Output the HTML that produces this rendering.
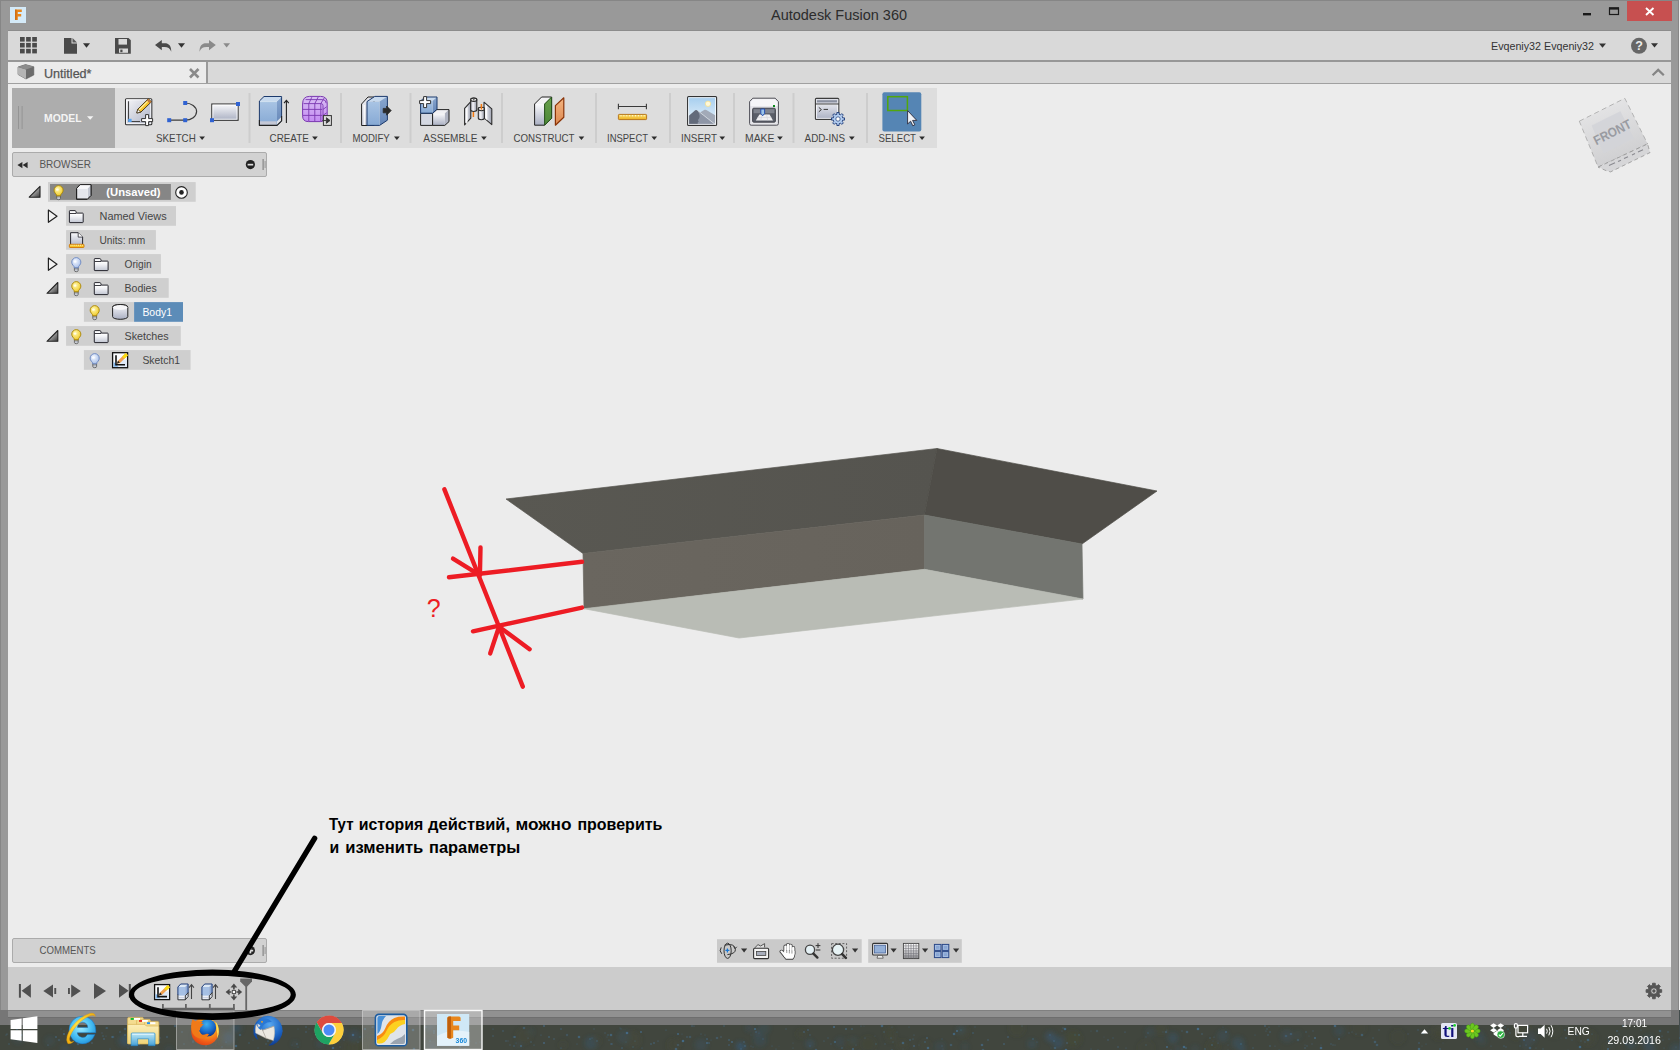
<!DOCTYPE html>
<html><head><meta charset="utf-8">
<style>
*{box-sizing:border-box;margin:0;padding:0}
html,body{width:1680px;height:1050px;overflow:hidden;background:#3d3f36;font-family:"Liberation Sans",sans-serif;}
.abs{position:absolute}
svg text{font-family:"Liberation Sans",sans-serif}
#desk{left:0;top:0;width:1680px;height:1050px;background:#3e4136}
#win{left:0;top:0;width:1679px;height:1025px;background:#999999;border:1px solid #868686;border-bottom:none}
#qat{left:8px;top:30px;width:1663px;height:30px;background:#d9d9d9;border-top:1px solid #8c8c8c}
#sep1{left:8px;top:60px;width:1663px;height:2px;background:#979797}
#tabbar{left:8px;top:62px;width:1663px;height:21px;background:#d9d9d9}
#tab{left:8px;top:62px;width:200px;height:21px;background:#ebebeb;border-right:2px solid #9a9a9a}
#sep2{left:8px;top:83px;width:1663px;height:1px;background:#a0a0a0}
#canvas{left:8px;top:84px;width:1663px;height:883px;background:#ececec}
#tl{left:8px;top:967px;width:1663px;height:43px;background:#cccccc}
#toolbar{left:12px;top:88px;width:925px;height:60px;background:#dddddd}
#model{left:12px;top:88px;width:103px;height:60px;background:#adadad}
#bh{left:12px;top:152px;width:255px;height:25px;background:#d2d2d2;border:1px solid #ababab;border-radius:2px}
#ch{left:12px;top:938px;width:255px;height:25px;background:#d2d2d2;border:1px solid #ababab;border-radius:2px}
#rstrip{left:1679px;top:0;width:1px;height:1010px;background:#f2f2f2}
#closeb{left:1627px;top:1px;width:45px;height:20px;background:#c75050}
</style></head><body>
<div id="desk" class="abs"></div>
<div id="win" class="abs"></div>
<div id="rstrip" class="abs"></div>
<div id="closeb" class="abs"></div>
<div id="qat" class="abs"></div>
<div id="sep1" class="abs"></div>
<div id="tabbar" class="abs"></div>
<div id="tab" class="abs"></div>
<div id="sep2" class="abs"></div>
<div id="canvas" class="abs"></div>
<div id="tl" class="abs"></div>
<div id="toolbar" class="abs"></div>
<div id="model" class="abs"></div>
<div id="bh" class="abs"></div>
<div id="ch" class="abs"></div>
<svg class="abs" style="left:0;top:0" width="1680" height="1050" viewBox="0 0 1680 1050">
<defs>
<linearGradient id="gGray" x1="0" y1="0" x2="0" y2="1"><stop offset="0" stop-color="#fafafc"/><stop offset="1" stop-color="#a9afc2"/></linearGradient>
<linearGradient id="gGrayD" x1="0" y1="0" x2="1" y2="1"><stop offset="0" stop-color="#f8f8fa"/><stop offset="1" stop-color="#aab0c4"/></linearGradient>
<linearGradient id="gBlue" x1="0" y1="0" x2="0" y2="1"><stop offset="0" stop-color="#a9c4e4"/><stop offset="1" stop-color="#86a9d4"/></linearGradient>
<linearGradient id="gBlueS" x1="0" y1="0" x2="0" y2="1"><stop offset="0" stop-color="#89a7d0"/><stop offset="1" stop-color="#6485b6"/></linearGradient>
<linearGradient id="gPurple" x1="0" y1="0" x2="0" y2="1"><stop offset="0" stop-color="#d9c0f4"/><stop offset="1" stop-color="#c48cf2"/></linearGradient>
<linearGradient id="gSky" x1="0" y1="0" x2="0" y2="1"><stop offset="0" stop-color="#a4cdee"/><stop offset="1" stop-color="#eef6fc"/></linearGradient>
<linearGradient id="gOr" x1="0" y1="0" x2="0" y2="1"><stop offset="0" stop-color="#f4b480"/><stop offset="1" stop-color="#dc8850"/></linearGradient>
<linearGradient id="gGreen" x1="0" y1="0" x2="0" y2="1"><stop offset="0" stop-color="#68a04c"/><stop offset="1" stop-color="#4c8838"/></linearGradient>
<linearGradient id="gYel" x1="0" y1="0" x2="0" y2="1"><stop offset="0" stop-color="#fbe070"/><stop offset="1" stop-color="#eeb020"/></linearGradient>
<linearGradient id="gFold" x1="0" y1="0" x2="0" y2="1"><stop offset="0" stop-color="#ffffff"/><stop offset="0.45" stop-color="#f4f5f8"/><stop offset="1" stop-color="#c2c6d2"/></linearGradient>
<radialGradient id="gBulbY" cx="0.4" cy="0.35" r="0.7"><stop offset="0" stop-color="#fff8b0"/><stop offset="1" stop-color="#f0c820"/></radialGradient>
<radialGradient id="gBulbB" cx="0.4" cy="0.35" r="0.7"><stop offset="0" stop-color="#f4f8ff"/><stop offset="1" stop-color="#a4bce8"/></radialGradient>
</defs>

<g id="titlebar">
<rect x="10" y="7" width="16" height="16" fill="#d4eaf8"/>
<path d="M15.2 9.5 h6.6 v2.6 h-4 v2 h3.4 v2.4 h-3.4 v3.6 h-2.6 z" fill="#e8861c"/>
<path d="M15.2 9.5 h1.2 v10.6 h-1.2 z" fill="#c8640c"/>
<text x="771" y="20.4" textLength="136" lengthAdjust="spacingAndGlyphs" font-size="15" fill="#2c2c2c" font-weight="normal" >Autodesk Fusion 360</text>
<rect x="1583" y="13" width="8" height="2.4" fill="#1a1a1a"/>
<rect x="1609.5" y="8" width="9" height="6.5" fill="none" stroke="#1a1a1a" stroke-width="1.2"/><rect x="1609" y="7.4" width="10" height="2.2" fill="#1a1a1a"/>
<path d="M1646 8 l7.5 7 M1653.5 8 l-7.5 7" stroke="#fff" stroke-width="1.9" fill="none"/>
</g>
<g id="qat-icons" fill="#4a4a4a">
<rect x="20.0" y="37.0" width="4.7" height="4.6"/>
<rect x="26.1" y="37.0" width="4.7" height="4.6"/>
<rect x="32.2" y="37.0" width="4.7" height="4.6"/>
<rect x="20.0" y="42.9" width="4.7" height="4.6"/>
<rect x="26.1" y="42.9" width="4.7" height="4.6"/>
<rect x="32.2" y="42.9" width="4.7" height="4.6"/>
<rect x="20.0" y="48.8" width="4.7" height="4.6"/>
<rect x="26.1" y="48.8" width="4.7" height="4.6"/>
<rect x="32.2" y="48.8" width="4.7" height="4.6"/>
<path d="M64 38 h7.5 v5.5 h5.5 v10.3 h-13 z"/><path d="M72.5 38 l4.5 4.5 h-4.5 z" fill="#5a5a5a"/>
<polygon points="83,43.2 90,43.2 86.5,47.800000000000004" fill="#333"/>
<path d="M115 38 h13.5 l2.3 2.3 v13.5 h-15.8 z"/><rect x="118.5" y="39" width="8.5" height="5.6" fill="#d9d9d9"/><rect x="119" y="48.5" width="9" height="4.3" fill="#d9d9d9"/><rect x="120.3" y="49.6" width="2.2" height="2.6" fill="#4a4a4a"/>
<path d="M155 45 l6.8 -5 v3.2 h2.7 c4.6 0 6.8 2.6 6.8 8.5 c-1.4 -3.4 -3.4 -4.6 -6.8 -4.6 h-2.7 v3.2 z"/>
<polygon points="178,43.2 185,43.2 181.5,47.800000000000004" fill="#333"/>
<path d="M215.8 45 l-6.8 -5 v3.2 h-2.7 c-4.6 0 -6.8 2.6 -6.8 8.5 c1.4 -3.4 3.4 -4.6 6.8 -4.6 h2.7 v3.2 z" fill="#8a8a8a"/>
<polygon points="223.3,43.2 230.0,43.2 226.65,47.6" fill="#8a8a8a"/>
</g>
<text x="1491" y="50" textLength="103" lengthAdjust="spacingAndGlyphs" font-size="11" fill="#333" font-weight="normal" >Evqeniy32 Evqeniy32</text>
<polygon points="1599,43.5 1606,43.5 1602.5,47.7" fill="#333"/>
<circle cx="1639" cy="45.8" r="8" fill="#666"/>
<text x="1639" y="50.4" text-anchor="middle" font-size="12.5" font-weight="bold" fill="#ececec">?</text>
<polygon points="1651,43.2 1658,43.2 1654.5,47.6" fill="#333"/>
<path d="M1652.6 75.3 l5.6 -5.4 l5.6 5.4" stroke="#858585" stroke-width="2.2" fill="none"/>
<g id="tabicons">
<path d="M18 67 l7.5 -2.4 l8.3 2.2 v8.2 l-7.8 4 l-8 -4.6 z" fill="#6c6c6c" stroke="#5a5a5a" stroke-width="0.6"/>
<path d="M18 67 l8 2.6 v9.4 l-8 -4.6 z" fill="#b4b4b4"/>
<path d="M18 67 l7.5 -2.4 l8.3 2.2 l-7.8 2.8 z" fill="#8c8c8c"/>
<text x="44" y="77.6" textLength="47.5" lengthAdjust="spacingAndGlyphs" font-size="12.5" fill="#555" font-weight="normal" stroke="#555" stroke-width="0.25">Untitled*</text>
<path d="M190 69 l8.5 8.5 M198.5 69 l-8.5 8.5" stroke="#8a8a8a" stroke-width="2.6" fill="none"/>
</g>
<g id="modelbtn">
<rect x="18" y="106" width="1" height="23" fill="#959595"/><rect x="21.6" y="106" width="1" height="23" fill="#959595"/>
<text x="44" y="121.8" textLength="37.5" lengthAdjust="spacingAndGlyphs" font-size="10.5" fill="#f4f4f4" font-weight="bold" >MODEL</text>
<polygon points="87,116.2 93.4,116.2 90.2,119.8" fill="#f4f4f4"/>
</g>
<rect x="248.5" y="93" width="2" height="50" fill="#cdcdcd"/>
<rect x="340.0" y="93" width="2" height="50" fill="#cdcdcd"/>
<rect x="409.5" y="93" width="2" height="50" fill="#cdcdcd"/>
<rect x="501.0" y="93" width="2" height="50" fill="#cdcdcd"/>
<rect x="595.0" y="93" width="2" height="50" fill="#cdcdcd"/>
<rect x="669.0" y="93" width="2" height="50" fill="#cdcdcd"/>
<rect x="733.0" y="93" width="2" height="50" fill="#cdcdcd"/>
<rect x="792.5" y="93" width="2" height="50" fill="#cdcdcd"/>
<rect x="866.0" y="93" width="2" height="50" fill="#cdcdcd"/>
<text x="156" y="141.6" textLength="39.8" lengthAdjust="spacingAndGlyphs" font-size="10.2" fill="#454545" font-weight="normal" >SKETCH</text>
<polygon points="199.3,136.4 205.0,136.4 202.15,139.9" fill="#2c2c2c"/>
<text x="269.5" y="141.6" textLength="39.3" lengthAdjust="spacingAndGlyphs" font-size="10.2" fill="#454545" font-weight="normal" >CREATE</text>
<polygon points="312.1,136.4 317.8,136.4 314.95000000000005,139.9" fill="#2c2c2c"/>
<text x="352.4" y="141.6" textLength="37.4" lengthAdjust="spacingAndGlyphs" font-size="10.2" fill="#454545" font-weight="normal" >MODIFY</text>
<polygon points="394,136.4 399.7,136.4 396.85,139.9" fill="#2c2c2c"/>
<text x="423.3" y="141.6" textLength="54.2" lengthAdjust="spacingAndGlyphs" font-size="10.2" fill="#454545" font-weight="normal" >ASSEMBLE</text>
<polygon points="481.1,136.4 486.8,136.4 483.95000000000005,139.9" fill="#2c2c2c"/>
<text x="513.4" y="141.6" textLength="61.1" lengthAdjust="spacingAndGlyphs" font-size="10.2" fill="#454545" font-weight="normal" >CONSTRUCT</text>
<polygon points="578.6,136.4 584.3000000000001,136.4 581.45,139.9" fill="#2c2c2c"/>
<text x="607" y="141.6" textLength="41" lengthAdjust="spacingAndGlyphs" font-size="10.2" fill="#454545" font-weight="normal" >INSPECT</text>
<polygon points="651.4,136.4 657.1,136.4 654.25,139.9" fill="#2c2c2c"/>
<text x="681" y="141.6" textLength="36" lengthAdjust="spacingAndGlyphs" font-size="10.2" fill="#454545" font-weight="normal" >INSERT</text>
<polygon points="719.4,136.4 725.1,136.4 722.25,139.9" fill="#2c2c2c"/>
<text x="745" y="141.6" textLength="29.4" lengthAdjust="spacingAndGlyphs" font-size="10.2" fill="#454545" font-weight="normal" >MAKE</text>
<polygon points="777.1,136.4 782.8000000000001,136.4 779.95,139.9" fill="#2c2c2c"/>
<text x="804.6" y="141.6" textLength="40.4" lengthAdjust="spacingAndGlyphs" font-size="10.2" fill="#454545" font-weight="normal" >ADD-INS</text>
<polygon points="849,136.4 854.7,136.4 851.85,139.9" fill="#2c2c2c"/>
<text x="878.5" y="141.6" textLength="37.5" lengthAdjust="spacingAndGlyphs" font-size="10.2" fill="#454545" font-weight="normal" >SELECT</text>
<polygon points="919.2,136.4 924.9000000000001,136.4 922.0500000000001,139.9" fill="#2c2c2c"/>
<g id="ic-sketch">
<rect x="125.5" y="98.7" width="26.3" height="26" rx="1" fill="url(#gGrayD)" stroke="#333" stroke-width="1.1"/>
<rect x="126.6" y="99.8" width="24.1" height="23.8" fill="none" stroke="#fff" stroke-width="0.9" opacity="0.85"/>
<path d="M128.5 101.2 v20.3 h11.5" stroke="#444" stroke-width="1.1" fill="none"/>
<rect x="128.2" y="118.8" width="3.4" height="3.2" fill="#5aa4f0"/>
<path d="M136.8 113 l1 -3.8 l10.6 -10.4 l3 3 l-10.6 10.4 z" fill="#f8c42c" stroke="#3a2a10" stroke-width="0.9" stroke-linejoin="round"/>
<path d="M138.8 110 l10 -9.8" stroke="#fff0a0" stroke-width="1.1"/>
<path d="M146.8 100.4 l1.6 -1.6 l3 3 l-1.6 1.6 z" fill="#c07838"/>
<path d="M136.8 113 l1 -3.8 l2.9 2.9 z" fill="#fff" stroke="#3a2a10" stroke-width="0.7"/>
<path d="M145.6 114.6 h3 v4 h4 v3 h-4 v4 h-3 v-4 h-4 v-3 h4 z" fill="#fff" stroke="#333" stroke-width="1" stroke-linejoin="round"/>
</g>
<g id="ic-arc">
<path d="M169 120.2 h16 a11.6 8.6 0 0 0 0 -17.2" stroke="#3c3c3c" stroke-width="1.2" fill="none"/>
<rect x="167.2" y="118.2" width="4" height="4" fill="#2f62d2"/>
<rect x="183.2" y="118.2" width="4" height="4" fill="#2f62d2"/>
<rect x="183.2" y="101" width="4" height="4" fill="#2f62d2"/>
</g>
<g id="ic-rect">
<rect x="211.8" y="104" width="26.3" height="16.3" fill="url(#gGray)" stroke="#333" stroke-width="1.1"/>
<rect x="212.9" y="105.1" width="24.1" height="14.1" fill="none" stroke="#fff" stroke-width="0.9" opacity="0.9"/>
<rect x="236" y="102" width="4" height="4" fill="#2f62d2"/><rect x="210" y="118.2" width="4" height="4" fill="#2f62d2"/>
</g>
<g id="ic-extrude">
<polygon points="259.4,101 264.0,96.5 281.6,96.5 277,101" fill="#c8daee"/><polygon points="277,101 281.6,96.5 281.6,120.9 277,125.4" fill="url(#gBlueS)"/><rect x="259.4" y="101" width="17.600000000000023" height="24.400000000000006" fill="url(#gBlue)"/><path d="M259.4 101 L264.0 96.5 L281.6 96.5 L281.6 120.9 L277 125.4 L259.4 125.4 Z" fill="none" stroke="#1c3a6c" stroke-width="1.0" stroke-linejoin="round"/>
<rect x="260" y="121.3" width="16.6" height="3.6" fill="#c4c8d6"/><polygon points="277,121.3 281.6,116.8 281.6,120.9 277,125.4" fill="#dfe3ea"/>
<path d="M259.4 120 V125.4 H277 L281.6 120.9 V116" fill="none" stroke="#222" stroke-width="1.1" stroke-linejoin="round"/>
<path d="M260 101.6 h16.6 l4 -4" stroke="#e8f0f8" stroke-width="0.7" fill="none"/>
<path d="M286.4 123 V100.6 M284 103.2 l2.4 -2.8 l2.4 2.8" stroke="#222" stroke-width="1.1" fill="none"/>
</g>
<g id="ic-form">
<path d="M302.6 104 q0 -7.6 7 -7.6 h11 q6.6 0 6.6 6.6 v12 q0 3 -2.4 4.6 q-1.6 2 -4.4 2 h-12 q-5.8 0 -5.8 -5.8 z" fill="url(#gPurple)" stroke="#7a38b0" stroke-width="1"/>
<g stroke="#7a38b0" stroke-width="0.9" fill="none">
<path d="M302.8 109.4 h19.4 M302.8 115.4 h19.4 M308.8 103.6 v17.8 M314.8 103.6 v17.8 M320.8 103.6 v17.8"/>
<path d="M303.6 103.6 h17.4 q2 0 2 2 v15"/>
<path d="M305.6 99.6 h17 q3.4 0 3.6 3.6 M308.8 103.6 l3 -6.4 M314.8 103.6 l3.4 -6.6 M320.8 103.6 l3.4 -5.6 M323 109.4 l3.6 -2.6 M323 115.4 l3.6 -2.6"/>
</g>
<rect x="323.4" y="115.6" width="8" height="9.8" fill="#dedede" stroke="#333" stroke-width="1"/>
<path d="M322.4 120.5 h4 v-2.8 l3.6 2.8 l-3.6 2.8 v-2.8" fill="#333" stroke="#333" stroke-width="0.9"/>
</g>
<g id="ic-modify">
<path d="M361.6 104 l6.4 -7 h6 v28.5 h-12.4 z" fill="url(#gGrayD)" stroke="#222" stroke-width="1" stroke-linejoin="round"/>
<path d="M364.4 105 v20" stroke="#fff" stroke-width="1.6" opacity="0.8"/>
<polygon points="367,101.6 374.8,96.39999999999999 387.40000000000003,96.39999999999999 379.6,101.6" fill="#c8daee"/><polygon points="379.6,101.6 387.40000000000003,96.39999999999999 387.40000000000003,120.2 379.6,125.4" fill="url(#gBlueS)"/><rect x="367" y="101.6" width="12.600000000000023" height="23.80000000000001" fill="url(#gBlue)"/><path d="M367 101.6 L374.8 96.39999999999999 L387.40000000000003 96.39999999999999 L387.40000000000003 120.2 L379.6 125.4 L367 125.4 Z" fill="none" stroke="#1c3a6c" stroke-width="1.0" stroke-linejoin="round"/>
<path d="M383.2 108.4 h3.4 v-2.4 l4.6 4.6 l-4.6 4.6 v-2.4 h-3.4 z" fill="#2a2a2a" stroke="#2a2a2a" stroke-width="0.8" stroke-linejoin="round"/>
</g>
<g id="ic-newcomp">
<polygon points="420.6,113.4 420.6,113.4 432.6,113.4 432.6,113.4" fill="#eee"/><polygon points="432.6,113.4 432.6,113.4 432.6,125.4 432.6,125.4" fill="#b4b8c6"/><rect x="420.6" y="113.4" width="12.0" height="12.0" fill="#d4d8e2"/><path d="M420.6 113.4 L420.6 113.4 L432.6 113.4 L432.6 125.4 L432.6 125.4 L420.6 125.4 Z" fill="none" stroke="#222" stroke-width="1.0" stroke-linejoin="round"/>
<polygon points="432.6,113.4 436.8,109.60000000000001 449.0,109.60000000000001 444.8,113.4" fill="#f0f0f4"/><polygon points="444.8,113.4 449.0,109.60000000000001 449.0,121.60000000000001 444.8,125.4" fill="#b0b4c2"/><rect x="432.6" y="113.4" width="12.199999999999989" height="12.0" fill="url(#gGray)"/><path d="M432.6 113.4 L436.8 109.60000000000001 L449.0 109.60000000000001 L449.0 121.60000000000001 L444.8 125.4 L432.6 125.4 Z" fill="none" stroke="#222" stroke-width="1.0" stroke-linejoin="round"/>
<polygon points="420.6,101 425.0,97 437.0,97 432.6,101" fill="#c8daee"/><polygon points="432.6,101 437.0,97 437.0,109.2 432.6,113.2" fill="url(#gBlueS)"/><rect x="420.6" y="101" width="12.0" height="12.200000000000003" fill="url(#gBlue)"/><path d="M420.6 101 L425.0 97 L437.0 97 L437.0 109.2 L432.6 113.2 L420.6 113.2 Z" fill="none" stroke="#1c3a6c" stroke-width="1.0" stroke-linejoin="round"/>
<path d="M423.6 96.6 h3 v4 h4 v3 h-4 v4 h-3 v-4 h-4 v-3 h4 z" fill="#fff" stroke="#333" stroke-width="1" stroke-linejoin="round"/>
</g>
<defs><linearGradient id="gLeaf" x1="0" y1="0" x2="1" y2="0"><stop offset="0" stop-color="#f4f4f8"/><stop offset="0.45" stop-color="#d4d6de"/><stop offset="1" stop-color="#9ea2b0"/></linearGradient><linearGradient id="gCyl" x1="0" y1="0" x2="1" y2="0"><stop offset="0" stop-color="#b8bcc8"/><stop offset="0.4" stop-color="#f4f4f8"/><stop offset="1" stop-color="#9498a6"/></linearGradient></defs>
<g id="ic-joint" stroke="#2e2e2e" stroke-width="1.1" stroke-linejoin="round">
<path d="M464.6 108.4 l6.2 -6.8 v16.6 l-6.2 6.6 z" fill="url(#gLeaf)"/>
<path d="M466 108.6 l1.6 -1.8 v15.6 l-1.6 1.8 z" fill="#fff" stroke="none" opacity="0.9"/>
<path d="M470.7 99.8 a3.05 1.7 0 0 1 6.1 0 v10 a3.05 1.7 0 0 1 -6.1 0 z" fill="url(#gCyl)"/>
<ellipse cx="473.75" cy="99.8" rx="3.05" ry="1.7" fill="#f8f8f8"/><ellipse cx="473.75" cy="99.8" rx="1" ry="0.6" fill="#222" stroke="none"/>
<path d="M473.4 112 v5" stroke="#f47a10" stroke-width="1.5"/>
<path d="M484 102.2 l7.8 6.6 v15.8 l-7.8 -6.8 z" fill="url(#gLeaf)"/>
<path d="M485.4 104.8 l1.8 1.5 v14 l-1.8 -1.5 z" fill="#fff" stroke="none" opacity="0.9"/>
<path d="M478.3 109 a3.05 1.7 0 0 1 6.1 0 v9 a3.05 1.7 0 0 1 -6.1 0 z" fill="url(#gCyl)"/>
<ellipse cx="481.35" cy="109" rx="3.05" ry="1.7" fill="#f4f4f4"/>
<path d="M481.4 104 v5.6" stroke="#f47a10" stroke-width="1.5"/>
</g>
<g id="ic-construct">
<polygon points="534.6,104 541.6,97 551.6,97 544.6,104" fill="#f2f2f4"/><polygon points="544.6,104 551.6,97 551.6,118.2 544.6,125.2" fill="url(#gGreen)"/><rect x="534.6" y="104" width="10.0" height="21.200000000000003" fill="url(#gGray)"/><path d="M534.6 104 L541.6 97 L551.6 97 L551.6 118.2 L544.6 125.2 L534.6 125.2 Z" fill="none" stroke="#222" stroke-width="1.0" stroke-linejoin="round"/>
<polygon points="544.6,104 551.6,97 551.6,118.2 544.6,125.2" fill="url(#gGreen)" stroke="#26501c" stroke-width="1" stroke-linejoin="round"/>
<polygon points="555.4,105.6 563.8,97.8 563.8,117.2 555.4,125.2" fill="url(#gOr)" stroke="#8a3408" stroke-width="1.2" stroke-linejoin="round"/>
</g>
<g id="ic-inspect">
<path d="M618.4 106.5 h28 M618.4 103.8 v5.4 M646.4 103.8 v5.4" stroke="#3a3a3a" stroke-width="1.1" fill="none"/>
<rect x="618.4" y="114.4" width="28.2" height="5.2" rx="0.8" fill="url(#gYel)" stroke="#b06c10" stroke-width="0.9"/>
<path d="M621.0 115 v1.4 M623.9 115 v1.4 M626.8 115 v1.4 M629.7 115 v1.4 M632.6 115 v1.4 M635.5 115 v1.4 M638.4 115 v1.4 M641.3 115 v1.4 M644.2 115 v1.4" stroke="#fff6d0" stroke-width="1"/>
</g>
<g id="ic-insert">
<rect x="687.6" y="96.6" width="29" height="28.8" rx="1" fill="url(#gSky)" stroke="#333" stroke-width="1.1"/>
<path d="M688.6 124.4 v-8.4 l6.6 -5.8 q1.2 -0.6 2.4 0.4 l18 14.2 z" fill="#626a7a"/>
<path d="M700 112.4 l4.6 -2.6 q1.4 -0.4 2.6 0.6 l8.4 5.2 v8.8 z" fill="#a2aab8"/>
<path d="M697.4 110.4 l18 14.2 h-17 q-1.8 -1.6 0.4 -3 q-1.6 -1.4 0.4 -3.4 q1.4 -2.8 -1.8 -7.8z" fill="#8e96a6"/>
<path d="M697.4 110.4 l18.2 14.4" stroke="#e8ecf0" stroke-width="0.7"/>
<circle cx="708" cy="103.8" r="2.7" fill="#fff8d8" stroke="#f4e090" stroke-width="0.8"/>
<rect x="688.7" y="97.7" width="26.8" height="26.6" fill="none" stroke="#fff" stroke-width="0.8" opacity="0.9"/>
</g>
<g id="ic-make">
<path d="M749.6 101.6 l3.2 -3.4 h22.4 l3.2 3.4 v22 q0 1.6 -1.6 1.6 h-25.6 q-1.6 0 -1.6 -1.6 z" fill="#e6e6ea" stroke="#505058" stroke-width="1"/>
<path d="M750.6 102 l2.6 -2.8 h21.6 l2.6 2.8 v4 h-26.8z" fill="#f6f6f8"/>
<rect x="752.6" y="108.2" width="22.8" height="14" rx="1.2" fill="#5a5e68" stroke="#3c3e46" stroke-width="0.9"/>
<rect x="753.6" y="109.2" width="20.8" height="4" fill="#80848e"/>
<polygon points="759.4,114.4 769.6,114.4 773,120.4 755.8,120.4" fill="#f0f0f2"/>
<path d="M757.4 117.4 h14 M762 114.6 l-1.2 5.6 M766.6 114.6 l1 5.6" stroke="#d0d0d6" stroke-width="0.6"/>
<path d="M760.8 109 h3.8 v4.4 l-1.9 2.4 l-1.9 -2.4 z" fill="#9cc4e8" stroke="#1c48b0" stroke-width="0.9"/>
<rect x="773" y="105" width="2" height="2" fill="#0c8c1c"/>
</g>
<g id="ic-addins">
<rect x="815.4" y="98.4" width="23.4" height="21" rx="1" fill="url(#gGray)" stroke="#3c3c3c" stroke-width="1.1"/>
<rect x="816.5" y="104.6" width="21.2" height="13.7" fill="none" stroke="#fff" stroke-width="0.8" opacity="0.9"/>
<rect x="816" y="99" width="22.2" height="4.6" fill="#dcdee6"/><rect x="817" y="100.2" width="20" height="2.2" fill="#8a90a0"/>
<path d="M815.4 104 h23.4" stroke="#3c3c3c" stroke-width="1"/>
<path d="M818.8 107.4 l2.6 2.2 l-2.6 2.2 M823.6 109.4 h4.4" stroke="#3a3a3a" stroke-width="1" fill="none"/>
<polygon points="844.50,117.87 844.50,120.13 842.67,120.12 842.09,121.51 843.40,122.80 841.80,124.40 840.51,123.09 839.12,123.67 839.13,125.50 836.87,125.50 836.88,123.67 835.49,123.09 834.20,124.40 832.60,122.80 833.91,121.51 833.33,120.12 831.50,120.13 831.50,117.87 833.33,117.88 833.91,116.49 832.60,115.20 834.20,113.60 835.49,114.91 836.88,114.33 836.87,112.50 839.13,112.50 839.12,114.33 840.51,114.91 841.80,113.60 843.40,115.20 842.09,116.49 842.67,117.88" fill="#b4cef0" stroke="#1c3a78" stroke-width="0.9" stroke-linejoin="round"/><circle cx="838" cy="119" r="2.2" fill="#fff" stroke="#1c3a78" stroke-width="0.7200000000000001"/>
</g>
<g id="ic-select">
<rect x="882.4" y="92.3" width="38.9" height="39.2" rx="2" fill="#5585b4"/>
<rect x="887.8" y="96.7" width="19.6" height="13.8" fill="none" stroke="#52a60c" stroke-width="1.5"/>
<path d="M907.6 110.6 v13.4 l3 -2.8 l2.2 4.6 l2 -1 l-2.2 -4.4 h4.2 z" fill="#f0f2f6" stroke="#2a2a3a" stroke-width="0.9" stroke-linejoin="round"/>
</g>
<g id="browserhdr">
<path d="M22.4 162 v6.2 l-5 -3.1 z M27.6 162 v6.2 l-5 -3.1 z" fill="#2c2c2c"/>
<text x="39.4" y="168.2" textLength="51.5" lengthAdjust="spacingAndGlyphs" font-size="10.2" fill="#555" font-weight="normal" >BROWSER</text>
<circle cx="250.4" cy="164.6" r="4.6" fill="#222"/><rect x="247.6" y="163.8" width="5.6" height="1.7" fill="#ddd"/>
<rect x="262.6" y="159" width="1" height="11" fill="#777"/><rect x="264.6" y="161" width="1" height="7" fill="#999"/>
</g>
<g id="commentshdr">
<text x="39.6" y="954.2" textLength="56.2" lengthAdjust="spacingAndGlyphs" font-size="10.2" fill="#555" font-weight="normal" >COMMENTS</text>
<circle cx="250.4" cy="950.6" r="4.6" fill="#222"/><rect x="247.6" y="949.8" width="5.6" height="1.7" fill="#ddd"/><rect x="249.55" y="947.8" width="1.7" height="5.6" fill="#ddd"/>
<rect x="262.6" y="945" width="1" height="11" fill="#777"/><rect x="264.6" y="947" width="1" height="7" fill="#999"/>
</g>
<g id="tree">
<rect x="48" y="182.1" width="147.7" height="19.7" fill="#cfcfcf"/><rect x="50" y="184.0" width="120.9" height="15.9" fill="#868686"/>
<defs><linearGradient id="gt29197" x1="0" y1="0" x2="1" y2="1"><stop offset="0.3" stop-color="#c4c4c4"/><stop offset="1" stop-color="#3a3a3a"/></linearGradient></defs><path d="M29.2 197.2 h10.8 v-10.8 z" fill="url(#gt29197)" stroke="#222" stroke-width="1.1" stroke-linejoin="round"/>
<path d="M56.7 195.4 h3.8 v3 q0 1.3 -1.9 1.3 q-1.9 0 -1.9 -1.3 z" fill="#c8ccd4" stroke="#555" stroke-width="0.8"/><path d="M56.800000000000004 196.79999999999998 h3.6" stroke="#666" stroke-width="0.7"/><path d="M56.6 195.79999999999998 q0 -1.5 -1.3 -2.5 a4.55 4.55 0 1 1 6.6 0 q-1.3 1 -1.3 2.5 z" fill="url(#gBulbY)" stroke="#a88408" stroke-width="0.9"/><ellipse cx="57.300000000000004" cy="189.7" rx="1.5" ry="1.1" fill="#fff" opacity="0.75"/>
<path d="M76.6 188.4 l3.6 -3.8 h10.8 v10.8 l-3.6 3.8 h-10.8 z" fill="#e4e6ec" stroke="#222" stroke-width="1" stroke-linejoin="round"/>
<path d="M87.4 188.4 l3.6 -3.8 v10.8 l-3.6 3.8 z" fill="#c4c8d2"/><path d="M76.6 188.4 l3.6 -3.8 h10.8 l-3.6 3.8 z" fill="#f8f8fa"/>
<path d="M76.6 188.4 h10.8 v10.8 M87.4 188.4 l3.6 -3.8" stroke="#fff" stroke-width="0.7" fill="none" opacity="0.8"/>
<path d="M76.6 188.4 l3.6 -3.8 h10.8 v10.8 l-3.6 3.8 h-10.8 z" fill="none" stroke="#222" stroke-width="1" stroke-linejoin="round"/>
<text x="106.3" y="196.0" textLength="54.3" lengthAdjust="spacingAndGlyphs" font-size="11" fill="#fff" font-weight="bold" >(Unsaved)</text>
<circle cx="181.5" cy="192.4" r="5.8" fill="#fff" stroke="#222" stroke-width="1.1"/><circle cx="181.5" cy="192.4" r="2.3" fill="#222"/>
<rect x="66.1" y="206.1" width="109.9" height="19.7" fill="#cfcfcf"/>
<path d="M48.4 210.1 v12.2 l8.6 -6.1 z" fill="#f2f2f2" stroke="#222" stroke-width="1.2" stroke-linejoin="round"/>
<path d="M69.4 211.2 q0 -0.6 0.6 -0.6 h5 q0.6 0 0.8 0.6 l0.6 1.9 h6.2 q0.6 0 0.6 0.6 v8.3 q0 0.6 -0.6 0.6 h-12.6 q-0.6 0 -0.6 -0.6 z" fill="url(#gFold)" stroke="#26262e" stroke-width="1" stroke-linejoin="round"/><path d="M69.80000000000001 213.5 h6.4" stroke="#26262e" stroke-width="0.9"/><path d="M70.4 214.5 h11.8" stroke="#fff" stroke-width="0.8" opacity="0.9"/>
<text x="99.5" y="220.0" textLength="67.1" lengthAdjust="spacingAndGlyphs" font-size="11" fill="#454545" font-weight="normal" >Named Views</text>
<rect x="66.1" y="230.1" width="89.8" height="19.7" fill="#cfcfcf"/>
<path d="M70.6 232.7 h7.6 l4.4 4.4 v9.6 h-12 z" fill="url(#gGray)" stroke="#26262e" stroke-width="1" stroke-linejoin="round"/><path d="M78.2 232.7 v4.4 h4.4" fill="#fff" stroke="#26262e" stroke-width="0.8"/>
<rect x="69.4" y="244.29999999999998" width="14.6" height="3.2" rx="0.6" fill="#f8c428" stroke="#d07808" stroke-width="0.9"/>
<path d="M71.0 244.7 v1.2 M72.9 244.7 v1.2 M74.8 244.7 v1.2 M76.7 244.7 v1.2 M78.6 244.7 v1.2 M80.5 244.7 v1.2 M82.4 244.7 v1.2" stroke="#fff4c0" stroke-width="0.8"/>
<text x="99.5" y="244.0" textLength="45.7" lengthAdjust="spacingAndGlyphs" font-size="11" fill="#454545" font-weight="normal" >Units: mm</text>
<rect x="66.1" y="254.1" width="94.8" height="19.7" fill="#cfcfcf"/>
<path d="M48.4 258.1 v12.2 l8.6 -6.1 z" fill="#f2f2f2" stroke="#222" stroke-width="1.2" stroke-linejoin="round"/>
<path d="M74.39999999999999 267.40000000000003 h3.8 v3 q0 1.3 -1.9 1.3 q-1.9 0 -1.9 -1.3 z" fill="#c8ccd4" stroke="#555" stroke-width="0.8"/><path d="M74.5 268.8 h3.6" stroke="#666" stroke-width="0.7"/><path d="M74.3 267.8 q0 -1.5 -1.3 -2.5 a4.55 4.55 0 1 1 6.6 0 q-1.3 1 -1.3 2.5 z" fill="url(#gBulbB)" stroke="#6a86c0" stroke-width="0.9"/><ellipse cx="75.0" cy="261.70000000000005" rx="1.5" ry="1.1" fill="#fff" opacity="0.75"/>
<path d="M94.3 259.20000000000005 q0 -0.6 0.6 -0.6 h5 q0.6 0 0.8 0.6 l0.6 1.9 h6.2 q0.6 0 0.6 0.6 v8.3 q0 0.6 -0.6 0.6 h-12.6 q-0.6 0 -0.6 -0.6 z" fill="url(#gFold)" stroke="#26262e" stroke-width="1" stroke-linejoin="round"/><path d="M94.7 261.5 h6.4" stroke="#26262e" stroke-width="0.9"/><path d="M95.3 262.5 h11.8" stroke="#fff" stroke-width="0.8" opacity="0.9"/>
<text x="124.5" y="268.0" textLength="27.1" lengthAdjust="spacingAndGlyphs" font-size="11" fill="#454545" font-weight="normal" >Origin</text>
<rect x="66.1" y="278.1" width="102.6" height="19.7" fill="#cfcfcf"/>
<defs><linearGradient id="gt47293" x1="0" y1="0" x2="1" y2="1"><stop offset="0.3" stop-color="#c4c4c4"/><stop offset="1" stop-color="#3a3a3a"/></linearGradient></defs><path d="M47 293.3 h10.8 v-10.8 z" fill="url(#gt47293)" stroke="#222" stroke-width="1.1" stroke-linejoin="round"/>
<path d="M74.39999999999999 291.40000000000003 h3.8 v3 q0 1.3 -1.9 1.3 q-1.9 0 -1.9 -1.3 z" fill="#c8ccd4" stroke="#555" stroke-width="0.8"/><path d="M74.5 292.8 h3.6" stroke="#666" stroke-width="0.7"/><path d="M74.3 291.8 q0 -1.5 -1.3 -2.5 a4.55 4.55 0 1 1 6.6 0 q-1.3 1 -1.3 2.5 z" fill="url(#gBulbY)" stroke="#a88408" stroke-width="0.9"/><ellipse cx="75.0" cy="285.70000000000005" rx="1.5" ry="1.1" fill="#fff" opacity="0.75"/>
<path d="M94.3 283.20000000000005 q0 -0.6 0.6 -0.6 h5 q0.6 0 0.8 0.6 l0.6 1.9 h6.2 q0.6 0 0.6 0.6 v8.3 q0 0.6 -0.6 0.6 h-12.6 q-0.6 0 -0.6 -0.6 z" fill="url(#gFold)" stroke="#26262e" stroke-width="1" stroke-linejoin="round"/><path d="M94.7 285.5 h6.4" stroke="#26262e" stroke-width="0.9"/><path d="M95.3 286.5 h11.8" stroke="#fff" stroke-width="0.8" opacity="0.9"/>
<text x="124.5" y="292.0" textLength="32.2" lengthAdjust="spacingAndGlyphs" font-size="11" fill="#454545" font-weight="normal" >Bodies</text>
<rect x="83.9" y="302.1" width="50.2" height="19.7" fill="#cfcfcf"/><rect x="134.1" y="302.1" width="48.9" height="19.7" fill="#5c8cb8"/>
<path d="M92.8 315.40000000000003 h3.8 v3 q0 1.3 -1.9 1.3 q-1.9 0 -1.9 -1.3 z" fill="#c8ccd4" stroke="#555" stroke-width="0.8"/><path d="M92.9 316.8 h3.6" stroke="#666" stroke-width="0.7"/><path d="M92.7 315.8 q0 -1.5 -1.3 -2.5 a4.55 4.55 0 1 1 6.6 0 q-1.3 1 -1.3 2.5 z" fill="url(#gBulbY)" stroke="#a88408" stroke-width="0.9"/><ellipse cx="93.4" cy="309.70000000000005" rx="1.5" ry="1.1" fill="#fff" opacity="0.75"/>
<path d="M112.6 307.1 a7.6 2.6 0 0 1 15.2 0 v9.6 a7.6 2.6 0 0 1 -15.2 0 z" fill="url(#gGray)" stroke="#222" stroke-width="1"/>
<ellipse cx="120.2" cy="307.1" rx="7.2" ry="2.3" fill="#f6f6f8" stroke="#fff" stroke-width="0.5"/><path d="M112.6 307.1 a7.6 2.6 0 0 1 15.2 0" fill="none" stroke="#222" stroke-width="1"/>
<text x="142.4" y="316.0" textLength="29.6" lengthAdjust="spacingAndGlyphs" font-size="11" fill="#fff" font-weight="normal" >Body1</text>
<rect x="66.1" y="326.1" width="114.7" height="19.7" fill="#cfcfcf"/>
<defs><linearGradient id="gt47341" x1="0" y1="0" x2="1" y2="1"><stop offset="0.3" stop-color="#c4c4c4"/><stop offset="1" stop-color="#3a3a3a"/></linearGradient></defs><path d="M47 341.3 h10.8 v-10.8 z" fill="url(#gt47341)" stroke="#222" stroke-width="1.1" stroke-linejoin="round"/>
<path d="M74.39999999999999 339.40000000000003 h3.8 v3 q0 1.3 -1.9 1.3 q-1.9 0 -1.9 -1.3 z" fill="#c8ccd4" stroke="#555" stroke-width="0.8"/><path d="M74.5 340.8 h3.6" stroke="#666" stroke-width="0.7"/><path d="M74.3 339.8 q0 -1.5 -1.3 -2.5 a4.55 4.55 0 1 1 6.6 0 q-1.3 1 -1.3 2.5 z" fill="url(#gBulbY)" stroke="#a88408" stroke-width="0.9"/><ellipse cx="75.0" cy="333.70000000000005" rx="1.5" ry="1.1" fill="#fff" opacity="0.75"/>
<path d="M94.3 331.20000000000005 q0 -0.6 0.6 -0.6 h5 q0.6 0 0.8 0.6 l0.6 1.9 h6.2 q0.6 0 0.6 0.6 v8.3 q0 0.6 -0.6 0.6 h-12.6 q-0.6 0 -0.6 -0.6 z" fill="url(#gFold)" stroke="#26262e" stroke-width="1" stroke-linejoin="round"/><path d="M94.7 333.5 h6.4" stroke="#26262e" stroke-width="0.9"/><path d="M95.3 334.5 h11.8" stroke="#fff" stroke-width="0.8" opacity="0.9"/>
<text x="124.5" y="340.0" textLength="44.2" lengthAdjust="spacingAndGlyphs" font-size="11" fill="#454545" font-weight="normal" >Sketches</text>
<rect x="83.9" y="350.1" width="106.7" height="19.7" fill="#cfcfcf"/>
<path d="M92.8 363.40000000000003 h3.8 v3 q0 1.3 -1.9 1.3 q-1.9 0 -1.9 -1.3 z" fill="#c8ccd4" stroke="#555" stroke-width="0.8"/><path d="M92.9 364.8 h3.6" stroke="#666" stroke-width="0.7"/><path d="M92.7 363.8 q0 -1.5 -1.3 -2.5 a4.55 4.55 0 1 1 6.6 0 q-1.3 1 -1.3 2.5 z" fill="url(#gBulbB)" stroke="#6a86c0" stroke-width="0.9"/><ellipse cx="93.4" cy="357.70000000000005" rx="1.5" ry="1.1" fill="#fff" opacity="0.75"/>
<rect x="112.6" y="352.70000000000005" width="15" height="15" fill="#fbfcfe" stroke="#111" stroke-width="1.3"/><polygon points="113.6,366.70000000000005 113.6,361.70000000000005 118.6,366.70000000000005" fill="#7cb4ec"/><rect x="119.6" y="359.70000000000005" width="7.2" height="7.2" fill="#dfe8f6"/><path d="M116.0 355.30000000000007 v9.4 h9" stroke="#111" stroke-width="1.6" fill="none"/><path d="M116.8 363.70000000000005 l1.2 -3 l7.8 -7.6 l2.2 2.2 l-8 7.6 z" fill="#f0a050"/><path d="M122.19999999999999 356.50000000000006 l3.6 -3.4 l2.2 2.2 l-3.6 3.4 z" fill="#f8dc10"/><path d="M116.8 363.70000000000005 l1.2 -3 l1.9 1.9 z" fill="#222"/>
<text x="142.4" y="364.0" textLength="37.6" lengthAdjust="spacingAndGlyphs" font-size="11" fill="#454545" font-weight="normal" >Sketch1</text>
</g>
<g id="viewcube">
<defs><linearGradient id="gVC" x1="0" y1="0" x2="0.4" y2="1"><stop offset="0" stop-color="#e9e9ea"/><stop offset="1" stop-color="#cfcfd1"/></linearGradient></defs>
<polygon points="1579.3,121.2 1624.8,98.3 1647.6,143.9 1598.1,167.1" fill="url(#gVC)" stroke="#909090" stroke-width="0.6" stroke-dasharray="5 3.4"/>
<polygon points="1598.1,167.1 1647.6,143.9 1650,152.6 1610.5,171.9 1606,170.6" fill="#d6d6d8" stroke="#8a8a8a" stroke-width="0.7" stroke-dasharray="4 3"/>
<polygon points="1591.6,125.6 1620.4,111.2 1634,138.6 1603.6,153.4" fill="#d2d4d8" opacity="0.85"/>
<text x="0" y="0" transform="translate(1612.4,132.2) rotate(-26.7)" text-anchor="middle" font-size="13" font-weight="bold" fill="#999ba1" dominant-baseline="central" textLength="40.5" lengthAdjust="spacingAndGlyphs">FRONT</text>
<path d="M1609 165.4 l6 -2.6 M1618 161.6 l3 -1.4 M1624 158.6 l4 -1.8 M1632 155 l3 -1.4 M1638 152 l5 -2.2" stroke="#8a8a90" stroke-width="1.1"/>
</g>
<g id="navbar">
<rect x="717" y="939.2" width="144.7" height="23.6" fill="#cacaca"/><rect x="868.2" y="939.2" width="93.6" height="23.6" fill="#cacaca"/>
<g stroke="#333" stroke-width="1" fill="none"><ellipse cx="727.6" cy="950.8" rx="3.6" ry="7.6"/><path d="M721.2 947.4 q-2.4 3.6 0.6 6.4 M724.6 945.2 q10 -2.4 10.8 4 q0.4 4.6 -8 5.4 M733.6 946.4 l1.4 2.2 l1.8 -1.8"/></g><path d="M725.4 950.4 h4 M727.4 948.4 v4" stroke="#1878d8" stroke-width="1.2"/>
<polygon points="741,948.6 747.2,948.6 744.1,952.6" fill="#333"/>
<path d="M754.4 948.2 l3.6 -3.6 l2.6 1.4 l4 -2.4 v3.8" stroke="#555" stroke-width="1" fill="#e0e0e0"/><rect x="753.6" y="948.2" width="15" height="10.4" rx="1" fill="#f4f4f4" stroke="#333" stroke-width="1.1"/><rect x="756.4" y="951.4" width="9.4" height="4" fill="#a8aebc" stroke="#444" stroke-width="0.8"/>
<g fill="#333" stroke="#333" stroke-width="1.7" stroke-linejoin="round"><rect x="784.3" y="945.4" width="2.3" height="9" rx="1.1"/><rect x="786.9" y="943.8" width="2.3" height="10" rx="1.1"/><rect x="789.5" y="944.6" width="2.3" height="10" rx="1.1"/><rect x="792.1" y="946.8" width="2.3" height="8" rx="1.1"/><path d="M784.3 951 h10.1 v3.6 q0 2.6 -1.8 4.2 h-6.6 q-1 -1.4 -1.7 -2.6 z"/><path d="M780.3 951.6 q0.4 -1.4 1.8 -0.8 l3.4 3 l-0.6 3.4 z"/></g><g fill="#fff" stroke="#fff" stroke-width="0.2"><rect x="784.3" y="945.4" width="2.3" height="9" rx="1.1"/><rect x="786.9" y="943.8" width="2.3" height="10" rx="1.1"/><rect x="789.5" y="944.6" width="2.3" height="10" rx="1.1"/><rect x="792.1" y="946.8" width="2.3" height="8" rx="1.1"/><path d="M784.3 951 h10.1 v3.6 q0 2.6 -1.8 4.2 h-6.6 q-1 -1.4 -1.7 -2.6 z"/><path d="M780.3 951.6 q0.4 -1.4 1.8 -0.8 l3.4 3 l-0.6 3.4 z"/></g><path d="M786.75 950 v3 M789.35 950 v3.4 M791.95 950.6 v3" stroke="#555" stroke-width="0.6"/>
<circle cx="810" cy="949.8" r="4.6" fill="#e4f0f4" stroke="#444" stroke-width="1.3"/><path d="M813.4 953.6 l4 4" stroke="#333" stroke-width="2.4" stroke-linecap="round"/><path d="M815.6 945.6 h4.8 M818 943.2 v4.8 M815.8 950 h4.6" stroke="#333" stroke-width="1"/>
<rect x="831.6" y="943.6" width="15" height="14.6" fill="none" stroke="#444" stroke-width="0.8" stroke-dasharray="2 1.6"/><circle cx="838" cy="949.8" r="5.6" fill="#e6f2f4" stroke="#444" stroke-width="1.3"/><path d="M842.2 954.2 l3.6 3.6" stroke="#333" stroke-width="2.6" stroke-linecap="round"/>
<polygon points="852,948.6 858.2,948.6 855.1,952.6" fill="#333"/>
<rect x="872.6" y="943.4" width="15" height="11.6" rx="1" fill="#e8e8ea" stroke="#333" stroke-width="1.1"/><rect x="874.6" y="945.2" width="11" height="7.8" fill="#94b0d8" stroke="#3a5890" stroke-width="0.7"/><path d="M877 958.2 h6.2 l-0.8 -2.8 h-4.6 z" fill="#f0f0f0" stroke="#444" stroke-width="0.7"/>
<polygon points="890.5,948.6 896.7,948.6 893.6,952.6" fill="#333"/>
<defs><linearGradient id="gGrid" x1="0" y1="0" x2="0" y2="1"><stop offset="0" stop-color="#ffffff"/><stop offset="0.35" stop-color="#ececee"/><stop offset="1" stop-color="#8e8e92"/></linearGradient></defs>
<rect x="903.4" y="943.4" width="15.4" height="15.2" fill="url(#gGrid)" stroke="#444" stroke-width="0.9"/><path d="M905.90 943.6 v14.8 M903.6 945.90 h15 M908.45 943.6 v14.8 M903.6 948.40 h15 M911.00 943.6 v14.8 M903.6 950.90 h15 M913.55 943.6 v14.8 M903.6 953.40 h15 M916.10 943.6 v14.8 M903.6 955.90 h15" stroke="#74747a" stroke-width="0.6"/>
<polygon points="922,948.6 928.2,948.6 925.1,952.6" fill="#333"/>
<rect x="934.4" y="944.4" width="6.6" height="6" fill="#a4bce0" stroke="#2a4888" stroke-width="1"/><rect x="936.0" y="946.0" width="3.4" height="2.8" fill="#88a6d4"/>
<rect x="942.2" y="944.4" width="6.6" height="6" fill="#a4bce0" stroke="#2a4888" stroke-width="1"/><rect x="943.8000000000001" y="946.0" width="3.4" height="2.8" fill="#88a6d4"/>
<rect x="934.4" y="951.6" width="6.6" height="6" fill="#a4bce0" stroke="#2a4888" stroke-width="1"/><rect x="936.0" y="953.2" width="3.4" height="2.8" fill="#88a6d4"/>
<rect x="942.2" y="951.6" width="6.6" height="6" fill="#a4bce0" stroke="#2a4888" stroke-width="1"/><rect x="943.8000000000001" y="953.2" width="3.4" height="2.8" fill="#88a6d4"/>
<polygon points="953,948.6 959.2,948.6 956.1,952.6" fill="#333"/>
</g>
<g id="tlctl" fill="#505050">
<rect x="18.9" y="984" width="2" height="13.7"/><polygon points="30.9,984 30.9,997.7 21.6,990.8"/>
<polygon points="53,984.4 53,997.4 43.3,990.9"/><rect x="54.3" y="988" width="1.9" height="6"/>
<rect x="68" y="988" width="1.9" height="6"/><polygon points="71.2,984.4 71.2,997.4 80.8,990.9"/>
<polygon points="94,983.2 94,999 106,991.1"/>
<polygon points="119,984 119,997.7 128.6,990.8"/><rect x="128.8" y="984" width="2" height="13.7"/>
</g>
<g id="tlitems">
<rect x="154.6" y="984.6" width="15" height="15" fill="#fbfcfe" stroke="#111" stroke-width="1.3"/><polygon points="155.6,998.6 155.6,993.6 160.6,998.6" fill="#7cb4ec"/><rect x="161.6" y="991.6" width="7.2" height="7.2" fill="#dfe8f6"/><path d="M158.0 987.2 v9.4 h9" stroke="#111" stroke-width="1.6" fill="none"/><path d="M158.79999999999998 995.6 l1.2 -3 l7.8 -7.6 l2.2 2.2 l-8 7.6 z" fill="#f0a050"/><path d="M164.2 988.4 l3.6 -3.4 l2.2 2.2 l-3.6 3.4 z" fill="#f8dc10"/><path d="M158.79999999999998 995.6 l1.2 -3 l1.9 1.9 z" fill="#222"/>
<polygon points="177.9,987 180.70000000000002,984 188.1,984 185.3,987" fill="#dce8f4"/><polygon points="185.3,987 188.1,984 188.1,996.6 185.3,999.8" fill="#8eaad6"/><rect x="177.9" y="987" width="7.4" height="12.8" fill="#a6c0e4"/><rect x="178.3" y="995.6" width="7" height="4" fill="#eef0f6"/><polygon points="185.3,995.6 188.1,992.6 188.1,996.6 185.3,999.8" fill="#d8dce6"/><path d="M178.9 997.6 h5.4" stroke="#c0c8dc" stroke-width="0.8"/><path d="M177.9 995 V987 L180.70000000000002 984 H188.1 V993" fill="none" stroke="#1c3a78" stroke-width="1" stroke-linejoin="round"/><path d="M177.9 994.6 V999.8 H185.3 L188.1 996.6 V992.6 M185.3 999.8 V995.8 L188.1 992.8" fill="none" stroke="#2a2a2a" stroke-width="0.9" stroke-linejoin="round"/><path d="M191.5 999 V984.8 M189.1 987.6 l2.4 -2.9 l2.4 2.9" stroke="#444" stroke-width="1.1" fill="none"/>
<polygon points="201.9,987 204.70000000000002,984 212.1,984 209.3,987" fill="#dce8f4"/><polygon points="209.3,987 212.1,984 212.1,996.6 209.3,999.8" fill="#8eaad6"/><rect x="201.9" y="987" width="7.4" height="12.8" fill="#a6c0e4"/><rect x="202.3" y="995.6" width="7" height="4" fill="#eef0f6"/><polygon points="209.3,995.6 212.1,992.6 212.1,996.6 209.3,999.8" fill="#d8dce6"/><path d="M202.9 997.6 h5.4" stroke="#c0c8dc" stroke-width="0.8"/><path d="M201.9 995 V987 L204.70000000000002 984 H212.1 V993" fill="none" stroke="#1c3a78" stroke-width="1" stroke-linejoin="round"/><path d="M201.9 994.6 V999.8 H209.3 L212.1 996.6 V992.6 M209.3 999.8 V995.8 L212.1 992.8" fill="none" stroke="#2a2a2a" stroke-width="0.9" stroke-linejoin="round"/><path d="M215.5 999 V984.8 M213.1 987.6 l2.4 -2.9 l2.4 2.9" stroke="#444" stroke-width="1.1" fill="none"/>
<g stroke="#484848" stroke-width="1.6" fill="none"><path d="M233.9 986 v3.4 M233.9 994.6 v3.4 M228 992 h3.4 M236.4 992 h3.4"/></g>
<rect x="232.3" y="990.4" width="3.2" height="3.2" fill="#fafafa" stroke="#484848" stroke-width="0.9"/>
<g fill="#484848"><polygon points="233.9,983.6 230.6,987.6 237.2,987.6"/><polygon points="233.9,1000.4 230.6,996.4 237.2,996.4"/><polygon points="225.6,992 229.6,988.7 229.6,995.3"/><polygon points="242.2,992 238.2,988.7 238.2,995.3"/></g>
</g>
<polygon points="1661.68,989.64 1661.68,992.36 1659.64,992.38 1658.93,994.08 1660.36,995.54 1658.44,997.46 1656.98,996.03 1655.28,996.74 1655.26,998.78 1652.54,998.78 1652.52,996.74 1650.82,996.03 1649.36,997.46 1647.44,995.54 1648.87,994.08 1648.16,992.38 1646.12,992.36 1646.12,989.64 1648.16,989.62 1648.87,987.92 1647.44,986.46 1649.36,984.54 1650.82,985.97 1652.52,985.26 1652.54,983.22 1655.26,983.22 1655.28,985.26 1656.98,985.97 1658.44,984.54 1660.36,986.46 1658.93,987.92 1659.64,989.62" fill="#555" stroke="#555" stroke-width="0.9" stroke-linejoin="round"/><circle cx="1653.9" cy="991" r="3.1" fill="#cccccc" stroke="#555" stroke-width="0.7200000000000001"/>
<circle cx="1653.9" cy="991" r="1.7" fill="#555"/>
<g id="body3d">
<defs><linearGradient id="gF1" x1="0" y1="0" x2="1" y2="0"><stop offset="0" stop-color="#595852"/><stop offset="1" stop-color="#55544f"/></linearGradient>
<linearGradient id="gF3" x1="0" y1="0" x2="1" y2="0"><stop offset="0" stop-color="#6a665f"/><stop offset="1" stop-color="#67635c"/></linearGradient></defs>
<polygon points="506,499 937,448.5 924.5,515 583,553.5" fill="url(#gF1)" stroke="#575650" stroke-width="0.7"/>
<polygon points="937,448.5 1157,491 1082,544 924.5,515" fill="#4f4d48" stroke="#4f4d48" stroke-width="0.7"/>
<polygon points="583,553.5 924.5,515 924.5,569.3 584,608.7" fill="url(#gF3)" stroke="#69655e" stroke-width="0.7"/>
<polygon points="924.5,515 1082,544 1083,599 924.5,569.3" fill="#737570" stroke="#737570" stroke-width="0.7"/>
<polygon points="584,608.7 924.5,569.3 1083,599 739,638" fill="#b9bcb5" stroke="#b9bcb5" stroke-width="0.7"/>
</g>
<g stroke="#ed1c24" stroke-width="4.4" stroke-linecap="round" fill="none">
<line x1="444.4" y1="489.4" x2="522.8" y2="686.6"/>
<line x1="449" y1="577.3" x2="582" y2="561.8"/>
<line x1="473" y1="631.3" x2="582" y2="607.6"/>
<line x1="480.5" y1="547.4" x2="479.9" y2="575"/>
<line x1="453" y1="558.6" x2="479.7" y2="575.2"/>
<line x1="490.2" y1="653.4" x2="499" y2="626.7"/>
<line x1="529.6" y1="649.2" x2="499" y2="626.7"/>
</g>
<text x="433.6" y="617" text-anchor="middle" font-size="25" fill="#ed1c24">?</text>
<text x="329.0" y="830.2" font-size="16.2" font-weight="bold" fill="#000" textLength="24.5" lengthAdjust="spacingAndGlyphs">Тут</text>
<text x="358.8" y="830.2" font-size="16.2" font-weight="bold" fill="#000" textLength="64.5" lengthAdjust="spacingAndGlyphs">история</text>
<text x="428.1" y="830.2" font-size="16.2" font-weight="bold" fill="#000" textLength="81.9" lengthAdjust="spacingAndGlyphs">действий,</text>
<text x="515.5" y="830.2" font-size="16.2" font-weight="bold" fill="#000" textLength="56" lengthAdjust="spacingAndGlyphs">можно</text>
<text x="577.4" y="830.2" font-size="16.2" font-weight="bold" fill="#000" textLength="85" lengthAdjust="spacingAndGlyphs">проверить</text>
<text x="329.6" y="852.8" font-size="16.2" font-weight="bold" fill="#000" textLength="9.7" lengthAdjust="spacingAndGlyphs">и</text>
<text x="345.2" y="852.8" font-size="16.2" font-weight="bold" fill="#000" textLength="78.1" lengthAdjust="spacingAndGlyphs">изменить</text>
<text x="429" y="852.8" font-size="16.2" font-weight="bold" fill="#000" textLength="91.2" lengthAdjust="spacingAndGlyphs">параметры</text>
<g id="taskbar">
<rect x="0" y="1010" width="1680" height="7" fill="#919191"/><rect x="0" y="1010" width="1680" height="1" fill="#808080"/>
<rect x="0" y="1017" width="1680" height="8" fill="#777777"/><rect x="0" y="1017" width="1680" height="1" fill="#6e6e6e"/>
<rect x="0" y="1010" width="8" height="15" fill="#767676"/><rect x="1671" y="1010" width="9" height="15" fill="#767676"/>
<rect x="0" y="1025" width="1680" height="25" fill="#41463e"/>
<rect x="1679" y="1010" width="1" height="40" fill="#434c4c"/>
<defs><filter id="fblur2" x="-1" y="-1" width="3" height="3"><feGaussianBlur stdDeviation="2"/></filter><filter id="fblur"><feGaussianBlur stdDeviation="0.7"/></filter><clipPath id="cpw"><rect x="0" y="1025" width="1680" height="25"/></clipPath></defs>
<g clip-path="url(#cpw)"><g filter="url(#fblur2)"><circle cx="760" cy="1040" r="6.7" fill="#34608c" opacity="0.18"/><circle cx="853" cy="1041" r="3.7" fill="#34608c" opacity="0.19"/><circle cx="1058" cy="1045" r="3.4" fill="#34608c" opacity="0.15"/><circle cx="152" cy="1046" r="5.8" fill="#34608c" opacity="0.11"/><circle cx="1650" cy="1049" r="5.6" fill="#34608c" opacity="0.21"/><circle cx="265" cy="1027" r="5.1" fill="#34608c" opacity="0.11"/><circle cx="320" cy="1033" r="3.1" fill="#34608c" opacity="0.18"/><circle cx="740" cy="1046" r="5.1" fill="#34608c" opacity="0.22"/><circle cx="840" cy="1042" r="4.8" fill="#34608c" opacity="0.15"/><circle cx="1676" cy="1050" r="6.4" fill="#34608c" opacity="0.23"/><circle cx="530" cy="1032" r="4.2" fill="#34608c" opacity="0.11"/><circle cx="1287" cy="1036" r="6.4" fill="#34608c" opacity="0.17"/><circle cx="1610" cy="1046" r="3.0" fill="#34608c" opacity="0.14"/><circle cx="1529" cy="1038" r="6.9" fill="#34608c" opacity="0.17"/><circle cx="123" cy="1041" r="6.1" fill="#34608c" opacity="0.15"/><circle cx="146" cy="1035" r="6.9" fill="#34608c" opacity="0.24"/><circle cx="198" cy="1033" r="3.4" fill="#34608c" opacity="0.11"/><circle cx="1339" cy="1031" r="5.2" fill="#34608c" opacity="0.18"/><circle cx="320" cy="1044" r="3.5" fill="#34608c" opacity="0.22"/><circle cx="196" cy="1037" r="3.9" fill="#34608c" opacity="0.15"/><circle cx="1631" cy="1045" r="4.2" fill="#34608c" opacity="0.26"/><circle cx="354" cy="1036" r="6.4" fill="#34608c" opacity="0.22"/><circle cx="169" cy="1050" r="3.9" fill="#34608c" opacity="0.15"/><circle cx="1298" cy="1035" r="4.2" fill="#34608c" opacity="0.11"/><circle cx="151" cy="1040" r="4.0" fill="#34608c" opacity="0.21"/><circle cx="624" cy="1037" r="6.8" fill="#34608c" opacity="0.19"/><circle cx="965" cy="1047" r="3.7" fill="#34608c" opacity="0.13"/><circle cx="1526" cy="1046" r="4.0" fill="#34608c" opacity="0.13"/><circle cx="1242" cy="1049" r="3.8" fill="#34608c" opacity="0.27"/><circle cx="1482" cy="1041" r="4.7" fill="#34608c" opacity="0.12"/><circle cx="65" cy="1049" r="4.0" fill="#34608c" opacity="0.23"/><circle cx="432" cy="1046" r="5.4" fill="#34608c" opacity="0.15"/><circle cx="295" cy="1044" r="3.3" fill="#34608c" opacity="0.14"/><circle cx="940" cy="1047" r="5.5" fill="#34608c" opacity="0.15"/><circle cx="1541" cy="1032" r="3.1" fill="#34608c" opacity="0.15"/><circle cx="749" cy="1028" r="3.7" fill="#34608c" opacity="0.17"/><circle cx="961" cy="1030" r="4.4" fill="#34608c" opacity="0.26"/><circle cx="1647" cy="1042" r="5.8" fill="#34608c" opacity="0.21"/><circle cx="236" cy="1028" r="3.1" fill="#34608c" opacity="0.26"/><circle cx="1178" cy="1049" r="3.1" fill="#34608c" opacity="0.21"/><circle cx="810" cy="1044" r="4.3" fill="#34608c" opacity="0.28"/><circle cx="126" cy="1040" r="5.9" fill="#34608c" opacity="0.26"/><circle cx="1238" cy="1043" r="6.2" fill="#34608c" opacity="0.26"/><circle cx="591" cy="1043" r="6.6" fill="#34608c" opacity="0.26"/><circle cx="701" cy="1045" r="6.5" fill="#34608c" opacity="0.20"/><circle cx="1050" cy="1036" r="5.3" fill="#34608c" opacity="0.21"/><circle cx="135" cy="1042" r="7.0" fill="#34608c" opacity="0.26"/><circle cx="1223" cy="1036" r="5.9" fill="#34608c" opacity="0.20"/><circle cx="740" cy="1046" r="3.3" fill="#34608c" opacity="0.24"/><circle cx="50" cy="1041" r="4.9" fill="#34608c" opacity="0.14"/><circle cx="1173" cy="1038" r="5.5" fill="#34608c" opacity="0.27"/><circle cx="430" cy="1027" r="4.2" fill="#34608c" opacity="0.22"/><circle cx="340" cy="1031" r="6.6" fill="#34608c" opacity="0.22"/><circle cx="742" cy="1048" r="4.3" fill="#34608c" opacity="0.22"/><circle cx="333" cy="1037" r="6.2" fill="#34608c" opacity="0.26"/><circle cx="1479" cy="1036" r="5.3" fill="#34608c" opacity="0.16"/><circle cx="229" cy="1038" r="6.3" fill="#34608c" opacity="0.25"/><circle cx="1195" cy="1049" r="4.1" fill="#34608c" opacity="0.13"/><circle cx="757" cy="1033" r="3.9" fill="#34608c" opacity="0.17"/><circle cx="1051" cy="1038" r="4.3" fill="#34608c" opacity="0.25"/><circle cx="1650" cy="1037" r="3.3" fill="#34608c" opacity="0.11"/><circle cx="1466" cy="1028" r="5.8" fill="#34608c" opacity="0.20"/><circle cx="519" cy="1045" r="3.1" fill="#34608c" opacity="0.12"/><circle cx="764" cy="1028" r="6.3" fill="#34608c" opacity="0.14"/><circle cx="237" cy="1028" r="5.5" fill="#34608c" opacity="0.18"/><circle cx="1058" cy="1042" r="6.2" fill="#34608c" opacity="0.27"/><circle cx="1150" cy="1032" r="4.9" fill="#34608c" opacity="0.13"/><circle cx="18" cy="1038" r="5.9" fill="#34608c" opacity="0.13"/><circle cx="458" cy="1035" r="5.8" fill="#34608c" opacity="0.19"/><circle cx="1032" cy="1044" r="4.6" fill="#34608c" opacity="0.24"/><circle cx="1522" cy="1029" r="8.7" fill="#4a4c30" opacity="0.19"/><circle cx="218" cy="1037" r="7.1" fill="#4a4c30" opacity="0.21"/><circle cx="633" cy="1040" r="8.4" fill="#4a4c30" opacity="0.20"/><circle cx="1586" cy="1038" r="7.3" fill="#4a4c30" opacity="0.12"/><circle cx="1213" cy="1046" r="7.2" fill="#4a4c30" opacity="0.19"/><circle cx="358" cy="1048" r="8.9" fill="#4a4c30" opacity="0.22"/><circle cx="902" cy="1045" r="5.6" fill="#4a4c30" opacity="0.21"/><circle cx="1438" cy="1035" r="4.4" fill="#4a4c30" opacity="0.15"/><circle cx="925" cy="1045" r="6.4" fill="#4a4c30" opacity="0.10"/><circle cx="1359" cy="1028" r="8.0" fill="#4a4c30" opacity="0.12"/><circle cx="563" cy="1045" r="4.7" fill="#4a4c30" opacity="0.12"/><circle cx="868" cy="1044" r="8.2" fill="#4a4c30" opacity="0.18"/><circle cx="1589" cy="1038" r="8.7" fill="#4a4c30" opacity="0.11"/><circle cx="372" cy="1039" r="5.5" fill="#4a4c30" opacity="0.19"/><circle cx="1073" cy="1039" r="8.2" fill="#4a4c30" opacity="0.17"/><circle cx="524" cy="1036" r="8.2" fill="#4a4c30" opacity="0.21"/><circle cx="350" cy="1047" r="8.8" fill="#4a4c30" opacity="0.16"/><circle cx="963" cy="1032" r="6.7" fill="#4a4c30" opacity="0.16"/><circle cx="1017" cy="1028" r="8.8" fill="#4a4c30" opacity="0.16"/><circle cx="673" cy="1045" r="6.8" fill="#4a4c30" opacity="0.16"/><circle cx="1161" cy="1029" r="6.7" fill="#4a4c30" opacity="0.15"/><circle cx="1608" cy="1048" r="5.3" fill="#4a4c30" opacity="0.16"/><circle cx="213" cy="1037" r="8.1" fill="#4a4c30" opacity="0.21"/><circle cx="801" cy="1034" r="5.0" fill="#4a4c30" opacity="0.17"/><circle cx="1554" cy="1030" r="7.9" fill="#4a4c30" opacity="0.10"/><circle cx="326" cy="1032" r="7.4" fill="#4a4c30" opacity="0.14"/><circle cx="597" cy="1041" r="4.5" fill="#4a4c30" opacity="0.19"/><circle cx="206" cy="1039" r="5.3" fill="#4a4c30" opacity="0.12"/><circle cx="891" cy="1037" r="5.9" fill="#4a4c30" opacity="0.15"/><circle cx="889" cy="1031" r="5.0" fill="#4a4c30" opacity="0.18"/><circle cx="1073" cy="1039" r="8.3" fill="#4a4c30" opacity="0.17"/><circle cx="1439" cy="1032" r="7.7" fill="#4a4c30" opacity="0.20"/><circle cx="1516" cy="1034" r="5.6" fill="#4a4c30" opacity="0.21"/><circle cx="366" cy="1050" r="8.4" fill="#4a4c30" opacity="0.12"/><circle cx="402" cy="1044" r="5.3" fill="#4a4c30" opacity="0.11"/><circle cx="1398" cy="1037" r="7.9" fill="#4a4c30" opacity="0.12"/><circle cx="677" cy="1043" r="4.1" fill="#4a4c30" opacity="0.12"/><circle cx="1146" cy="1048" r="8.8" fill="#4a4c30" opacity="0.11"/><circle cx="850" cy="1044" r="6.5" fill="#4a4c30" opacity="0.18"/><circle cx="318" cy="1029" r="4.5" fill="#4a4c30" opacity="0.10"/></g>
<g filter="url(#fblur)"><circle cx="927" cy="1038" r="1.0" fill="#4a88c0" opacity="0.37"/><circle cx="318" cy="1029" r="0.6" fill="#4a88c0" opacity="0.49"/><circle cx="1664" cy="1048" r="0.5" fill="#4a88c0" opacity="0.40"/><circle cx="226" cy="1042" r="0.5" fill="#4a88c0" opacity="0.47"/><circle cx="549" cy="1037" r="1.0" fill="#4a88c0" opacity="0.32"/><circle cx="353" cy="1035" r="1.3" fill="#4a88c0" opacity="0.45"/><circle cx="1418" cy="1030" r="0.8" fill="#4a88c0" opacity="0.33"/><circle cx="622" cy="1048" r="1.0" fill="#4a88c0" opacity="0.26"/><circle cx="861" cy="1026" r="0.5" fill="#4a88c0" opacity="0.48"/><circle cx="1184" cy="1047" r="1.3" fill="#4a88c0" opacity="0.53"/><circle cx="957" cy="1031" r="1.0" fill="#4a88c0" opacity="0.54"/><circle cx="1352" cy="1032" r="0.5" fill="#4a88c0" opacity="0.46"/><circle cx="1307" cy="1046" r="0.8" fill="#4a88c0" opacity="0.25"/><circle cx="554" cy="1039" r="0.7" fill="#4a88c0" opacity="0.47"/><circle cx="1286" cy="1036" r="1.3" fill="#4a88c0" opacity="0.26"/><circle cx="1340" cy="1033" r="0.5" fill="#4a88c0" opacity="0.20"/><circle cx="597" cy="1041" r="1.0" fill="#4a88c0" opacity="0.22"/><circle cx="459" cy="1049" r="0.7" fill="#4a88c0" opacity="0.32"/><circle cx="1108" cy="1040" r="1.0" fill="#4a88c0" opacity="0.23"/><circle cx="865" cy="1038" r="0.6" fill="#4a88c0" opacity="0.45"/><circle cx="1280" cy="1050" r="0.5" fill="#4a88c0" opacity="0.24"/><circle cx="182" cy="1032" r="0.8" fill="#4a88c0" opacity="0.34"/><circle cx="85" cy="1031" r="0.8" fill="#4a88c0" opacity="0.20"/><circle cx="434" cy="1033" r="0.7" fill="#4a88c0" opacity="0.39"/><circle cx="853" cy="1049" r="1.0" fill="#4a88c0" opacity="0.50"/><circle cx="167" cy="1037" r="1.3" fill="#4a88c0" opacity="0.23"/><circle cx="1004" cy="1044" r="0.5" fill="#4a88c0" opacity="0.34"/><circle cx="1577" cy="1035" r="0.6" fill="#4a88c0" opacity="0.50"/><circle cx="910" cy="1040" r="0.8" fill="#4a88c0" opacity="0.53"/><circle cx="707" cy="1039" r="1.0" fill="#4a88c0" opacity="0.31"/><circle cx="891" cy="1038" r="0.7" fill="#4a88c0" opacity="0.40"/><circle cx="476" cy="1043" r="0.7" fill="#4a88c0" opacity="0.21"/><circle cx="1298" cy="1040" r="1.3" fill="#4a88c0" opacity="0.25"/><circle cx="1268" cy="1035" r="0.7" fill="#4a88c0" opacity="0.46"/><circle cx="84" cy="1050" r="0.7" fill="#4a88c0" opacity="0.23"/><circle cx="1521" cy="1036" r="0.8" fill="#4a88c0" opacity="0.29"/><circle cx="1269" cy="1027" r="0.5" fill="#4a88c0" opacity="0.53"/><circle cx="1214" cy="1037" r="0.6" fill="#4a88c0" opacity="0.41"/><circle cx="193" cy="1041" r="0.8" fill="#4a88c0" opacity="0.24"/><circle cx="1447" cy="1035" r="0.6" fill="#4a88c0" opacity="0.24"/><circle cx="744" cy="1042" r="0.8" fill="#4a88c0" opacity="0.41"/><circle cx="1075" cy="1042" r="0.7" fill="#4a88c0" opacity="0.47"/><circle cx="892" cy="1050" r="0.7" fill="#4a88c0" opacity="0.46"/><circle cx="401" cy="1029" r="0.7" fill="#4a88c0" opacity="0.47"/><circle cx="1050" cy="1035" r="0.7" fill="#4a88c0" opacity="0.41"/><circle cx="1218" cy="1043" r="0.6" fill="#4a88c0" opacity="0.42"/><circle cx="1266" cy="1031" r="0.6" fill="#4a88c0" opacity="0.38"/><circle cx="1097" cy="1031" r="1.3" fill="#4a88c0" opacity="0.21"/><circle cx="102" cy="1033" r="0.8" fill="#4a88c0" opacity="0.21"/><circle cx="64" cy="1031" r="0.7" fill="#4a88c0" opacity="0.23"/><circle cx="145" cy="1042" r="1.0" fill="#4a88c0" opacity="0.28"/><circle cx="1649" cy="1038" r="0.7" fill="#4a88c0" opacity="0.27"/><circle cx="577" cy="1044" r="0.5" fill="#4a88c0" opacity="0.48"/><circle cx="751" cy="1046" r="0.6" fill="#4a88c0" opacity="0.36"/><circle cx="1255" cy="1035" r="0.6" fill="#4a88c0" opacity="0.33"/><circle cx="1098" cy="1050" r="0.7" fill="#4a88c0" opacity="0.30"/><circle cx="1275" cy="1046" r="0.6" fill="#4a88c0" opacity="0.35"/><circle cx="620" cy="1028" r="0.7" fill="#4a88c0" opacity="0.23"/><circle cx="139" cy="1040" r="0.8" fill="#4a88c0" opacity="0.49"/><circle cx="779" cy="1046" r="0.5" fill="#4a88c0" opacity="0.23"/><circle cx="358" cy="1042" r="0.5" fill="#4a88c0" opacity="0.44"/><circle cx="831" cy="1044" r="0.7" fill="#4a88c0" opacity="0.30"/><circle cx="240" cy="1035" r="1.3" fill="#4a88c0" opacity="0.31"/><circle cx="1523" cy="1034" r="0.8" fill="#4a88c0" opacity="0.40"/><circle cx="1543" cy="1049" r="0.7" fill="#4a88c0" opacity="0.35"/><circle cx="1349" cy="1033" r="0.7" fill="#4a88c0" opacity="0.28"/><circle cx="1626" cy="1044" r="1.0" fill="#4a88c0" opacity="0.29"/><circle cx="608" cy="1035" r="0.7" fill="#4a88c0" opacity="0.44"/><circle cx="982" cy="1045" r="1.3" fill="#4a88c0" opacity="0.40"/><circle cx="1339" cy="1039" r="1.0" fill="#4a88c0" opacity="0.40"/><circle cx="297" cy="1044" r="0.7" fill="#4a88c0" opacity="0.48"/><circle cx="372" cy="1027" r="0.6" fill="#4a88c0" opacity="0.40"/><circle cx="1624" cy="1042" r="0.8" fill="#4a88c0" opacity="0.22"/><circle cx="919" cy="1045" r="0.5" fill="#4a88c0" opacity="0.32"/><circle cx="460" cy="1029" r="0.7" fill="#4a88c0" opacity="0.23"/><circle cx="1065" cy="1029" r="1.3" fill="#4a88c0" opacity="0.49"/><circle cx="709" cy="1043" r="0.8" fill="#4a88c0" opacity="0.47"/><circle cx="876" cy="1044" r="0.8" fill="#4a88c0" opacity="0.32"/><circle cx="1356" cy="1034" r="0.6" fill="#4a88c0" opacity="0.37"/><circle cx="903" cy="1043" r="1.3" fill="#4a88c0" opacity="0.42"/><circle cx="78" cy="1044" r="1.3" fill="#4a88c0" opacity="0.32"/><circle cx="6" cy="1035" r="0.5" fill="#4a88c0" opacity="0.51"/><circle cx="1609" cy="1041" r="1.0" fill="#4a88c0" opacity="0.33"/><circle cx="17" cy="1029" r="0.8" fill="#4a88c0" opacity="0.52"/><circle cx="413" cy="1030" r="1.3" fill="#4a88c0" opacity="0.33"/><circle cx="282" cy="1031" r="0.8" fill="#4a88c0" opacity="0.39"/><circle cx="460" cy="1047" r="0.8" fill="#4a88c0" opacity="0.31"/><circle cx="193" cy="1042" r="0.6" fill="#4a88c0" opacity="0.52"/><circle cx="1265" cy="1026" r="0.8" fill="#4a88c0" opacity="0.52"/><circle cx="61" cy="1029" r="0.6" fill="#4a88c0" opacity="0.33"/><circle cx="988" cy="1040" r="0.8" fill="#4a88c0" opacity="0.41"/><circle cx="376" cy="1030" r="0.7" fill="#4a88c0" opacity="0.34"/><circle cx="1530" cy="1048" r="1.3" fill="#4a88c0" opacity="0.39"/><circle cx="1373" cy="1038" r="0.7" fill="#4a88c0" opacity="0.37"/><circle cx="676" cy="1049" r="1.3" fill="#4a88c0" opacity="0.39"/><circle cx="1608" cy="1038" r="0.6" fill="#4a88c0" opacity="0.34"/><circle cx="365" cy="1029" r="0.8" fill="#4a88c0" opacity="0.54"/><circle cx="1335" cy="1045" r="0.5" fill="#4a88c0" opacity="0.43"/><circle cx="399" cy="1026" r="0.8" fill="#4a88c0" opacity="0.52"/><circle cx="756" cy="1032" r="0.8" fill="#4a88c0" opacity="0.41"/><circle cx="264" cy="1030" r="0.7" fill="#4a88c0" opacity="0.25"/><circle cx="1526" cy="1045" r="0.6" fill="#4a88c0" opacity="0.42"/><circle cx="1668" cy="1032" r="1.0" fill="#4a88c0" opacity="0.22"/><circle cx="961" cy="1030" r="0.6" fill="#4a88c0" opacity="0.49"/><circle cx="1422" cy="1046" r="0.5" fill="#4a88c0" opacity="0.32"/><circle cx="1033" cy="1039" r="0.8" fill="#4a88c0" opacity="0.44"/><circle cx="139" cy="1044" r="1.0" fill="#4a88c0" opacity="0.50"/><circle cx="510" cy="1045" r="0.8" fill="#4a88c0" opacity="0.27"/><circle cx="1146" cy="1045" r="0.8" fill="#4a88c0" opacity="0.27"/><circle cx="913" cy="1039" r="0.6" fill="#4a88c0" opacity="0.53"/><circle cx="1619" cy="1034" r="0.8" fill="#4a88c0" opacity="0.23"/><circle cx="514" cy="1037" r="1.3" fill="#4a88c0" opacity="0.22"/><circle cx="125" cy="1029" r="1.3" fill="#4a88c0" opacity="0.34"/><circle cx="776" cy="1049" r="0.5" fill="#4a88c0" opacity="0.43"/><circle cx="21" cy="1035" r="1.3" fill="#4a88c0" opacity="0.37"/><circle cx="493" cy="1029" r="0.5" fill="#4a88c0" opacity="0.50"/><circle cx="1419" cy="1043" r="1.0" fill="#4a88c0" opacity="0.25"/><circle cx="1055" cy="1048" r="1.3" fill="#4a88c0" opacity="0.30"/><circle cx="567" cy="1035" r="1.3" fill="#4a88c0" opacity="0.23"/><circle cx="317" cy="1035" r="0.5" fill="#4a88c0" opacity="0.32"/><circle cx="1588" cy="1040" r="1.3" fill="#4a88c0" opacity="0.42"/><circle cx="751" cy="1035" r="0.5" fill="#4a88c0" opacity="0.25"/><circle cx="159" cy="1042" r="1.3" fill="#4a88c0" opacity="0.26"/><circle cx="325" cy="1027" r="0.8" fill="#4a88c0" opacity="0.41"/><circle cx="151" cy="1031" r="0.6" fill="#4a88c0" opacity="0.55"/><circle cx="729" cy="1045" r="0.7" fill="#4a88c0" opacity="0.52"/><circle cx="717" cy="1038" r="1.3" fill="#4a88c0" opacity="0.27"/><circle cx="249" cy="1043" r="0.8" fill="#4a88c0" opacity="0.32"/><circle cx="692" cy="1026" r="0.8" fill="#4a88c0" opacity="0.41"/><circle cx="534" cy="1045" r="0.6" fill="#4a88c0" opacity="0.43"/><circle cx="1022" cy="1026" r="0.7" fill="#4a88c0" opacity="0.27"/><circle cx="515" cy="1037" r="1.0" fill="#4a88c0" opacity="0.33"/><circle cx="856" cy="1045" r="0.5" fill="#4a88c0" opacity="0.41"/><circle cx="266" cy="1044" r="0.7" fill="#4a88c0" opacity="0.39"/><circle cx="592" cy="1038" r="0.6" fill="#4a88c0" opacity="0.40"/><circle cx="333" cy="1048" r="1.3" fill="#4a88c0" opacity="0.45"/><circle cx="1572" cy="1040" r="0.5" fill="#4a88c0" opacity="0.42"/><circle cx="332" cy="1028" r="0.6" fill="#4a88c0" opacity="0.37"/><circle cx="701" cy="1034" r="0.5" fill="#4a88c0" opacity="0.53"/><circle cx="607" cy="1037" r="0.5" fill="#4a88c0" opacity="0.36"/><circle cx="1226" cy="1032" r="1.0" fill="#4a88c0" opacity="0.39"/><circle cx="942" cy="1039" r="0.7" fill="#4a88c0" opacity="0.26"/><circle cx="1253" cy="1048" r="0.7" fill="#4a88c0" opacity="0.41"/><circle cx="206" cy="1046" r="0.7" fill="#4a88c0" opacity="0.44"/><circle cx="611" cy="1044" r="0.7" fill="#4a88c0" opacity="0.49"/><circle cx="312" cy="1039" r="0.5" fill="#4a88c0" opacity="0.36"/><circle cx="678" cy="1045" r="1.3" fill="#4a88c0" opacity="0.25"/><circle cx="1270" cy="1046" r="0.8" fill="#4a88c0" opacity="0.42"/><circle cx="1076" cy="1044" r="0.6" fill="#4a88c0" opacity="0.27"/><circle cx="786" cy="1029" r="0.8" fill="#4a88c0" opacity="0.24"/><circle cx="682" cy="1034" r="0.6" fill="#4a88c0" opacity="0.29"/><circle cx="954" cy="1034" r="1.3" fill="#4a88c0" opacity="0.47"/><circle cx="1212" cy="1045" r="0.8" fill="#4a88c0" opacity="0.54"/><circle cx="1008" cy="1037" r="0.8" fill="#4a88c0" opacity="0.51"/><circle cx="1534" cy="1040" r="0.8" fill="#4a88c0" opacity="0.46"/><circle cx="816" cy="1050" r="1.3" fill="#4a88c0" opacity="0.34"/><circle cx="729" cy="1040" r="1.0" fill="#4a88c0" opacity="0.32"/><circle cx="875" cy="1036" r="0.5" fill="#4a88c0" opacity="0.31"/><circle cx="92" cy="1043" r="0.8" fill="#4a88c0" opacity="0.46"/><circle cx="1004" cy="1044" r="0.7" fill="#4a88c0" opacity="0.51"/><circle cx="1473" cy="1032" r="0.8" fill="#4a88c0" opacity="0.28"/><circle cx="1467" cy="1049" r="0.8" fill="#4a88c0" opacity="0.44"/><circle cx="884" cy="1032" r="0.7" fill="#4a88c0" opacity="0.43"/><circle cx="1580" cy="1047" r="1.3" fill="#4a88c0" opacity="0.54"/><circle cx="1118" cy="1047" r="0.8" fill="#4a88c0" opacity="0.40"/><circle cx="276" cy="1042" r="0.8" fill="#4a88c0" opacity="0.40"/><circle cx="1518" cy="1028" r="0.6" fill="#4a88c0" opacity="0.24"/><circle cx="903" cy="1049" r="0.5" fill="#4a88c0" opacity="0.30"/><circle cx="1223" cy="1027" r="0.6" fill="#4a88c0" opacity="0.22"/><circle cx="1504" cy="1046" r="0.8" fill="#4a88c0" opacity="0.25"/><circle cx="1163" cy="1032" r="0.7" fill="#4a88c0" opacity="0.21"/><circle cx="1510" cy="1033" r="0.8" fill="#4a88c0" opacity="0.25"/><circle cx="1305" cy="1045" r="0.6" fill="#4a88c0" opacity="0.27"/><circle cx="1443" cy="1043" r="0.5" fill="#4a88c0" opacity="0.27"/><circle cx="1408" cy="1034" r="0.8" fill="#4a88c0" opacity="0.21"/><circle cx="1067" cy="1043" r="1.0" fill="#4a88c0" opacity="0.27"/><circle cx="1062" cy="1031" r="0.5" fill="#4a88c0" opacity="0.43"/><circle cx="514" cy="1046" r="0.7" fill="#4a88c0" opacity="0.50"/><circle cx="1198" cy="1029" r="1.3" fill="#4a88c0" opacity="0.53"/><circle cx="1309" cy="1036" r="0.6" fill="#4a88c0" opacity="0.28"/><circle cx="516" cy="1043" r="0.6" fill="#4a88c0" opacity="0.29"/><circle cx="1210" cy="1038" r="0.7" fill="#4a88c0" opacity="0.48"/><circle cx="626" cy="1042" r="0.5" fill="#4a88c0" opacity="0.41"/><circle cx="385" cy="1033" r="0.6" fill="#4a88c0" opacity="0.43"/><circle cx="465" cy="1041" r="0.5" fill="#4a88c0" opacity="0.36"/><circle cx="128" cy="1048" r="0.5" fill="#4a88c0" opacity="0.39"/><circle cx="76" cy="1040" r="0.7" fill="#4a88c0" opacity="0.39"/><circle cx="711" cy="1040" r="0.6" fill="#4a88c0" opacity="0.30"/><circle cx="1270" cy="1032" r="0.7" fill="#4a88c0" opacity="0.46"/><circle cx="48" cy="1045" r="0.6" fill="#4a88c0" opacity="0.55"/><circle cx="56" cy="1037" r="1.0" fill="#4a88c0" opacity="0.33"/><circle cx="1561" cy="1038" r="0.6" fill="#4a88c0" opacity="0.22"/><circle cx="1305" cy="1048" r="0.7" fill="#4a88c0" opacity="0.43"/><circle cx="1315" cy="1038" r="1.0" fill="#4a88c0" opacity="0.49"/><circle cx="1066" cy="1050" r="1.3" fill="#4a88c0" opacity="0.53"/><circle cx="292" cy="1045" r="0.6" fill="#4a88c0" opacity="0.24"/><circle cx="732" cy="1042" r="1.0" fill="#4a88c0" opacity="0.47"/><circle cx="1321" cy="1045" r="0.6" fill="#4a88c0" opacity="0.29"/><circle cx="914" cy="1046" r="1.0" fill="#4a88c0" opacity="0.37"/><circle cx="59" cy="1040" r="1.3" fill="#4a88c0" opacity="0.22"/><circle cx="753" cy="1047" r="0.7" fill="#4a88c0" opacity="0.25"/><circle cx="30" cy="1038" r="0.8" fill="#4a88c0" opacity="0.38"/><circle cx="1215" cy="1047" r="0.5" fill="#4a88c0" opacity="0.23"/><circle cx="1524" cy="1040" r="1.0" fill="#4a88c0" opacity="0.40"/><circle cx="1213" cy="1041" r="0.5" fill="#4a88c0" opacity="0.31"/><circle cx="71" cy="1034" r="1.0" fill="#4a88c0" opacity="0.46"/><circle cx="1312" cy="1044" r="0.8" fill="#4a88c0" opacity="0.23"/><circle cx="1379" cy="1030" r="0.7" fill="#4a88c0" opacity="0.29"/><circle cx="835" cy="1042" r="1.0" fill="#4a88c0" opacity="0.48"/><circle cx="103" cy="1036" r="0.7" fill="#4a88c0" opacity="0.44"/><circle cx="1182" cy="1049" r="0.6" fill="#4a88c0" opacity="0.37"/><circle cx="1279" cy="1050" r="0.6" fill="#4a88c0" opacity="0.46"/><circle cx="876" cy="1050" r="0.5" fill="#4a88c0" opacity="0.28"/><circle cx="1495" cy="1029" r="0.8" fill="#4a88c0" opacity="0.39"/><circle cx="793" cy="1048" r="0.5" fill="#4a88c0" opacity="0.44"/><circle cx="1205" cy="1049" r="1.0" fill="#4a88c0" opacity="0.28"/><circle cx="425" cy="1039" r="0.6" fill="#4a88c0" opacity="0.35"/><circle cx="145" cy="1031" r="0.7" fill="#4a88c0" opacity="0.32"/><circle cx="1648" cy="1041" r="0.5" fill="#4a88c0" opacity="0.26"/><circle cx="983" cy="1050" r="1.3" fill="#4a88c0" opacity="0.32"/><circle cx="1167" cy="1047" r="1.0" fill="#4a88c0" opacity="0.52"/><circle cx="298" cy="1047" r="0.6" fill="#4a88c0" opacity="0.33"/><circle cx="1313" cy="1031" r="0.7" fill="#4a88c0" opacity="0.29"/><circle cx="1333" cy="1045" r="0.8" fill="#4a88c0" opacity="0.27"/><circle cx="360" cy="1037" r="0.7" fill="#4a88c0" opacity="0.37"/><circle cx="824" cy="1041" r="0.6" fill="#4a88c0" opacity="0.50"/><circle cx="344" cy="1035" r="0.5" fill="#4a88c0" opacity="0.22"/><circle cx="465" cy="1049" r="1.0" fill="#4a88c0" opacity="0.21"/><circle cx="306" cy="1032" r="0.8" fill="#4a88c0" opacity="0.40"/><circle cx="1091" cy="1031" r="0.5" fill="#4a88c0" opacity="0.33"/><circle cx="258" cy="1048" r="0.7" fill="#4a88c0" opacity="0.25"/><circle cx="405" cy="1046" r="0.5" fill="#4a88c0" opacity="0.21"/><circle cx="541" cy="1035" r="0.5" fill="#4a88c0" opacity="0.50"/><circle cx="641" cy="1032" r="1.0" fill="#4a88c0" opacity="0.43"/><circle cx="508" cy="1041" r="0.8" fill="#4a88c0" opacity="0.21"/><circle cx="253" cy="1040" r="0.5" fill="#4a88c0" opacity="0.27"/><circle cx="690" cy="1037" r="1.3" fill="#4a88c0" opacity="0.25"/><circle cx="1187" cy="1032" r="1.3" fill="#4a88c0" opacity="0.36"/><circle cx="633" cy="1047" r="0.7" fill="#4a88c0" opacity="0.39"/><circle cx="755" cy="1029" r="1.0" fill="#4a88c0" opacity="0.50"/><circle cx="380" cy="1033" r="0.7" fill="#4a88c0" opacity="0.41"/><circle cx="236" cy="1046" r="1.3" fill="#4a88c0" opacity="0.42"/><circle cx="951" cy="1045" r="1.3" fill="#4a88c0" opacity="0.30"/><circle cx="1126" cy="1048" r="0.6" fill="#4a88c0" opacity="0.40"/><circle cx="594" cy="1029" r="0.7" fill="#4a88c0" opacity="0.28"/><circle cx="1063" cy="1028" r="0.8" fill="#4a88c0" opacity="0.24"/><circle cx="828" cy="1038" r="0.7" fill="#4a88c0" opacity="0.30"/><circle cx="1182" cy="1031" r="0.8" fill="#4a88c0" opacity="0.27"/><circle cx="1291" cy="1034" r="1.3" fill="#4a88c0" opacity="0.28"/><circle cx="156" cy="1034" r="0.8" fill="#4a88c0" opacity="0.48"/><circle cx="804" cy="1032" r="1.0" fill="#4a88c0" opacity="0.31"/><circle cx="1536" cy="1048" r="0.5" fill="#4a88c0" opacity="0.33"/><circle cx="106" cy="1036" r="0.5" fill="#4a88c0" opacity="0.33"/><circle cx="1423" cy="1033" r="1.3" fill="#4a88c0" opacity="0.31"/><circle cx="426" cy="1027" r="0.7" fill="#4a88c0" opacity="0.31"/><circle cx="627" cy="1033" r="1.3" fill="#4a88c0" opacity="0.51"/><circle cx="1079" cy="1035" r="0.7" fill="#4a88c0" opacity="0.53"/><circle cx="609" cy="1040" r="0.6" fill="#4a88c0" opacity="0.47"/><circle cx="1054" cy="1041" r="0.8" fill="#4a88c0" opacity="0.41"/><circle cx="107" cy="1028" r="0.8" fill="#4a88c0" opacity="0.51"/><circle cx="642" cy="1048" r="0.5" fill="#4a88c0" opacity="0.48"/><circle cx="1148" cy="1033" r="0.8" fill="#4a88c0" opacity="0.33"/><circle cx="1641" cy="1030" r="0.6" fill="#4a88c0" opacity="0.29"/><circle cx="434" cy="1031" r="1.0" fill="#4a88c0" opacity="0.20"/><circle cx="914" cy="1035" r="0.6" fill="#4a88c0" opacity="0.39"/><circle cx="1426" cy="1044" r="0.5" fill="#4a88c0" opacity="0.42"/><circle cx="942" cy="1046" r="0.7" fill="#4a88c0" opacity="0.29"/><circle cx="175" cy="1026" r="1.3" fill="#4a88c0" opacity="0.27"/><circle cx="666" cy="1030" r="0.6" fill="#4a88c0" opacity="0.49"/><circle cx="268" cy="1041" r="0.8" fill="#4a88c0" opacity="0.48"/><circle cx="493" cy="1036" r="0.7" fill="#4a88c0" opacity="0.46"/><circle cx="897" cy="1032" r="0.6" fill="#4a88c0" opacity="0.33"/><circle cx="1186" cy="1048" r="1.3" fill="#4a88c0" opacity="0.24"/><circle cx="106" cy="1028" r="0.5" fill="#4a88c0" opacity="0.51"/><circle cx="521" cy="1046" r="1.0" fill="#4a88c0" opacity="0.47"/><circle cx="808" cy="1030" r="0.8" fill="#4a88c0" opacity="0.50"/><circle cx="90" cy="1032" r="1.0" fill="#4a88c0" opacity="0.46"/><circle cx="1166" cy="1032" r="1.3" fill="#4a88c0" opacity="0.29"/><circle cx="1202" cy="1034" r="0.7" fill="#4a88c0" opacity="0.50"/><circle cx="344" cy="1040" r="0.6" fill="#4a88c0" opacity="0.40"/><circle cx="707" cy="1043" r="1.0" fill="#4a88c0" opacity="0.46"/><circle cx="452" cy="1030" r="0.6" fill="#4a88c0" opacity="0.33"/><circle cx="1125" cy="1032" r="0.6" fill="#4a88c0" opacity="0.54"/><circle cx="793" cy="1043" r="0.6" fill="#4a88c0" opacity="0.29"/><circle cx="455" cy="1032" r="1.3" fill="#4a88c0" opacity="0.34"/><circle cx="1568" cy="1050" r="0.5" fill="#4a88c0" opacity="0.26"/><circle cx="1676" cy="1047" r="0.6" fill="#4a88c0" opacity="0.30"/><circle cx="1228" cy="1050" r="0.5" fill="#4a88c0" opacity="0.34"/><circle cx="1520" cy="1046" r="0.8" fill="#4a88c0" opacity="0.26"/><circle cx="113" cy="1037" r="1.3" fill="#4a88c0" opacity="0.30"/><circle cx="658" cy="1041" r="0.6" fill="#4a88c0" opacity="0.54"/><circle cx="654" cy="1043" r="1.0" fill="#4a88c0" opacity="0.30"/><circle cx="1456" cy="1037" r="0.5" fill="#4a88c0" opacity="0.39"/><circle cx="1506" cy="1047" r="0.8" fill="#4a88c0" opacity="0.24"/><circle cx="544" cy="1026" r="1.0" fill="#4a88c0" opacity="0.40"/><circle cx="460" cy="1036" r="0.7" fill="#4a88c0" opacity="0.28"/><circle cx="810" cy="1035" r="0.7" fill="#4a88c0" opacity="0.40"/><circle cx="255" cy="1026" r="0.7" fill="#4a88c0" opacity="0.43"/><circle cx="7" cy="1034" r="0.6" fill="#4a88c0" opacity="0.55"/><circle cx="340" cy="1047" r="0.8" fill="#4a88c0" opacity="0.21"/><circle cx="590" cy="1039" r="1.0" fill="#4a88c0" opacity="0.22"/><circle cx="925" cy="1042" r="1.0" fill="#4a88c0" opacity="0.29"/><circle cx="317" cy="1033" r="0.6" fill="#4a88c0" opacity="0.55"/><circle cx="745" cy="1046" r="1.3" fill="#4a88c0" opacity="0.22"/><circle cx="1440" cy="1049" r="1.0" fill="#4a88c0" opacity="0.24"/><circle cx="125" cy="1035" r="1.0" fill="#4a88c0" opacity="0.31"/><circle cx="864" cy="1026" r="0.6" fill="#4a88c0" opacity="0.22"/><circle cx="612" cy="1044" r="0.7" fill="#4a88c0" opacity="0.48"/><circle cx="1331" cy="1044" r="0.8" fill="#4a88c0" opacity="0.31"/><circle cx="893" cy="1042" r="0.5" fill="#4a88c0" opacity="0.53"/><circle cx="810" cy="1046" r="0.8" fill="#4a88c0" opacity="0.29"/><circle cx="1528" cy="1027" r="1.0" fill="#4a88c0" opacity="0.25"/><circle cx="544" cy="1043" r="1.0" fill="#4a88c0" opacity="0.43"/><circle cx="1362" cy="1035" r="1.3" fill="#4a88c0" opacity="0.36"/><circle cx="524" cy="1028" r="1.3" fill="#4a88c0" opacity="0.31"/><circle cx="158" cy="1034" r="1.3" fill="#4a88c0" opacity="0.26"/><circle cx="79" cy="1029" r="0.7" fill="#4a88c0" opacity="0.44"/><circle cx="298" cy="1029" r="0.6" fill="#4a88c0" opacity="0.33"/><circle cx="306" cy="1027" r="0.8" fill="#4a88c0" opacity="0.38"/><circle cx="678" cy="1034" r="1.0" fill="#4a88c0" opacity="0.49"/><circle cx="1279" cy="1026" r="0.6" fill="#4a88c0" opacity="0.31"/><circle cx="1267" cy="1029" r="0.7" fill="#4a88c0" opacity="0.35"/><circle cx="1617" cy="1031" r="0.8" fill="#4a88c0" opacity="0.47"/><circle cx="1491" cy="1046" r="0.5" fill="#4a88c0" opacity="0.44"/><circle cx="1592" cy="1034" r="0.6" fill="#4a88c0" opacity="0.47"/><circle cx="882" cy="1026" r="1.3" fill="#4a88c0" opacity="0.42"/><circle cx="635" cy="1041" r="0.6" fill="#4a88c0" opacity="0.42"/><circle cx="579" cy="1037" r="1.3" fill="#4a88c0" opacity="0.42"/><circle cx="848" cy="1040" r="0.5" fill="#4a88c0" opacity="0.24"/><circle cx="1241" cy="1044" r="0.8" fill="#4a88c0" opacity="0.43"/><circle cx="705" cy="1035" r="0.6" fill="#4a88c0" opacity="0.33"/><circle cx="909" cy="1027" r="0.5" fill="#4a88c0" opacity="0.38"/><circle cx="759" cy="1033" r="0.5" fill="#4a88c0" opacity="0.41"/><circle cx="1565" cy="1030" r="0.8" fill="#4a88c0" opacity="0.31"/><circle cx="430" cy="1041" r="0.6" fill="#4a88c0" opacity="0.46"/><circle cx="1662" cy="1036" r="0.6" fill="#4a88c0" opacity="0.46"/><circle cx="1508" cy="1029" r="0.6" fill="#4a88c0" opacity="0.49"/><circle cx="1091" cy="1049" r="0.5" fill="#4a88c0" opacity="0.48"/><circle cx="859" cy="1050" r="0.5" fill="#4a88c0" opacity="0.26"/><circle cx="64" cy="1034" r="1.0" fill="#4a88c0" opacity="0.48"/><circle cx="763" cy="1039" r="0.8" fill="#4a88c0" opacity="0.27"/><circle cx="470" cy="1041" r="0.5" fill="#4a88c0" opacity="0.24"/><circle cx="740" cy="1044" r="0.6" fill="#4a88c0" opacity="0.23"/><circle cx="834" cy="1027" r="1.0" fill="#4a88c0" opacity="0.54"/><circle cx="110" cy="1049" r="0.7" fill="#4a88c0" opacity="0.26"/><circle cx="561" cy="1048" r="0.6" fill="#4a88c0" opacity="0.49"/><circle cx="197" cy="1030" r="0.8" fill="#4a88c0" opacity="0.21"/><circle cx="1146" cy="1037" r="0.8" fill="#4a88c0" opacity="0.23"/><circle cx="1660" cy="1031" r="1.3" fill="#4a88c0" opacity="0.31"/><circle cx="1608" cy="1049" r="1.0" fill="#4a88c0" opacity="0.43"/><circle cx="724" cy="1026" r="0.7" fill="#4a88c0" opacity="0.44"/><circle cx="1419" cy="1049" r="1.3" fill="#4a88c0" opacity="0.41"/><circle cx="1167" cy="1030" r="0.6" fill="#4a88c0" opacity="0.26"/><circle cx="975" cy="1027" r="0.7" fill="#4a88c0" opacity="0.24"/><circle cx="1581" cy="1041" r="0.7" fill="#4a88c0" opacity="0.31"/><circle cx="14" cy="1028" r="0.6" fill="#4a88c0" opacity="0.46"/><circle cx="605" cy="1033" r="0.8" fill="#4a88c0" opacity="0.27"/><circle cx="120" cy="1032" r="0.7" fill="#4a88c0" opacity="0.49"/><circle cx="687" cy="1037" r="1.0" fill="#4a88c0" opacity="0.24"/><circle cx="160" cy="1038" r="0.8" fill="#4a88c0" opacity="0.28"/><circle cx="973" cy="1033" r="0.7" fill="#4a88c0" opacity="0.53"/><circle cx="131" cy="1042" r="0.6" fill="#4a88c0" opacity="0.53"/><circle cx="651" cy="1044" r="1.0" fill="#4a88c0" opacity="0.28"/><circle cx="1075" cy="1035" r="0.7" fill="#4a88c0" opacity="0.30"/><circle cx="741" cy="1049" r="0.7" fill="#4a88c0" opacity="0.43"/><circle cx="21" cy="1041" r="0.5" fill="#4a88c0" opacity="0.34"/><circle cx="222" cy="1047" r="0.7" fill="#4a88c0" opacity="0.34"/><circle cx="468" cy="1028" r="1.0" fill="#4a88c0" opacity="0.24"/><circle cx="1104" cy="1037" r="0.6" fill="#4a88c0" opacity="0.23"/><circle cx="611" cy="1035" r="1.3" fill="#4a88c0" opacity="0.41"/><circle cx="1171" cy="1050" r="0.5" fill="#4a88c0" opacity="0.43"/><circle cx="262" cy="1028" r="0.6" fill="#4a88c0" opacity="0.36"/><circle cx="531" cy="1042" r="1.0" fill="#4a88c0" opacity="0.22"/><circle cx="373" cy="1027" r="0.8" fill="#4a88c0" opacity="0.35"/><circle cx="386" cy="1039" r="0.5" fill="#4a88c0" opacity="0.55"/><circle cx="112" cy="1037" r="0.8" fill="#4a88c0" opacity="0.48"/><circle cx="1566" cy="1038" r="1.0" fill="#4a88c0" opacity="0.27"/><circle cx="621" cy="1029" r="0.8" fill="#4a88c0" opacity="0.23"/><circle cx="1335" cy="1026" r="1.3" fill="#4a88c0" opacity="0.44"/><circle cx="1321" cy="1048" r="1.3" fill="#4a88c0" opacity="0.48"/><circle cx="1228" cy="1045" r="0.5" fill="#4a88c0" opacity="0.35"/><circle cx="262" cy="1035" r="0.7" fill="#4a88c0" opacity="0.53"/><circle cx="1505" cy="1027" r="0.7" fill="#4a88c0" opacity="0.34"/><circle cx="943" cy="1049" r="0.5" fill="#4a88c0" opacity="0.31"/><circle cx="852" cy="1029" r="1.0" fill="#4a88c0" opacity="0.28"/><circle cx="1113" cy="1038" r="0.7" fill="#4a88c0" opacity="0.30"/><circle cx="1306" cy="1032" r="0.8" fill="#4a88c0" opacity="0.36"/><circle cx="1663" cy="1040" r="0.6" fill="#4a88c0" opacity="0.40"/><circle cx="772" cy="1046" r="0.5" fill="#4a88c0" opacity="0.48"/><circle cx="846" cy="1029" r="1.0" fill="#4a88c0" opacity="0.38"/><circle cx="683" cy="1041" r="1.3" fill="#4a88c0" opacity="0.54"/><circle cx="694" cy="1026" r="0.6" fill="#4a88c0" opacity="0.48"/><circle cx="184" cy="1044" r="0.8" fill="#4a88c0" opacity="0.25"/><circle cx="892" cy="1027" r="0.5" fill="#4a88c0" opacity="0.37"/><circle cx="1532" cy="1039" r="0.5" fill="#4a88c0" opacity="0.34"/><circle cx="503" cy="1031" r="1.0" fill="#4a88c0" opacity="0.24"/><circle cx="1544" cy="1034" r="0.8" fill="#4a88c0" opacity="0.27"/><circle cx="1669" cy="1039" r="0.6" fill="#4a88c0" opacity="0.40"/><circle cx="842" cy="1048" r="0.8" fill="#4a88c0" opacity="0.42"/><circle cx="449" cy="1040" r="0.6" fill="#4a88c0" opacity="0.33"/><circle cx="721" cy="1037" r="0.7" fill="#4a88c0" opacity="0.43"/><circle cx="561" cy="1029" r="0.7" fill="#4a88c0" opacity="0.49"/><circle cx="104" cy="1039" r="1.0" fill="#4a88c0" opacity="0.31"/><circle cx="1375" cy="1042" r="1.3" fill="#4a88c0" opacity="0.33"/><circle cx="528" cy="1038" r="0.6" fill="#4a88c0" opacity="0.38"/><circle cx="885" cy="1044" r="0.7" fill="#4a88c0" opacity="0.34"/><circle cx="1623" cy="1026" r="1.0" fill="#4a88c0" opacity="0.33"/><circle cx="414" cy="1049" r="1.3" fill="#4a88c0" opacity="0.33"/><circle cx="506" cy="1041" r="1.0" fill="#4a88c0" opacity="0.22"/><circle cx="309" cy="1029" r="0.7" fill="#4a88c0" opacity="0.22"/><circle cx="156" cy="1032" r="0.7" fill="#4a88c0" opacity="0.48"/><circle cx="1585" cy="1042" r="0.7" fill="#4a88c0" opacity="0.34"/><circle cx="480" cy="1042" r="0.5" fill="#4a88c0" opacity="0.34"/><circle cx="379" cy="1032" r="0.5" fill="#4a88c0" opacity="0.31"/><circle cx="1377" cy="1045" r="1.3" fill="#4a88c0" opacity="0.30"/><circle cx="1680" cy="1038" r="0.8" fill="#4a88c0" opacity="0.42"/><circle cx="928" cy="1048" r="1.3" fill="#4a88c0" opacity="0.45"/><circle cx="1037" cy="1042" r="0.6" fill="#4a88c0" opacity="0.40"/><circle cx="9" cy="1044" r="0.8" fill="#4a88c0" opacity="0.32"/><circle cx="1051" cy="1048" r="0.5" fill="#4a88c0" opacity="0.26"/></g></g>
<rect x="176.5" y="1010.5" width="57.5" height="39" fill="#ffffff" fill-opacity="0.16" stroke="#d8d8d8" stroke-opacity="0.55" stroke-width="1"/>
<rect x="362.5" y="1010.5" width="57.5" height="39" fill="#ffffff" fill-opacity="0.22" stroke="#d8d8d8" stroke-opacity="0.6" stroke-width="1"/>
<rect x="424.5" y="1010.5" width="57.5" height="39" fill="#ffffff" fill-opacity="0.32" stroke="#ffffff" stroke-opacity="0.95" stroke-width="1.4"/>
<g fill="#fff"><polygon points="10.6,1020 21.6,1018.4 21.6,1029 10.6,1029"/><polygon points="22.8,1018.2 37.4,1016.2 37.4,1029 22.8,1029"/><polygon points="10.6,1030.2 21.6,1030.2 21.6,1040.8 10.6,1039.2"/><polygon points="22.8,1030.2 37.4,1030.2 37.4,1043 22.8,1041"/></g>
<defs><radialGradient id="gIE" cx="0.45" cy="0.4" r="0.75"><stop offset="0" stop-color="#a4ecff"/><stop offset="0.5" stop-color="#48c0f4"/><stop offset="1" stop-color="#1480d0"/></radialGradient><linearGradient id="gIEr" x1="0" y1="1" x2="1" y2="0"><stop offset="0" stop-color="#f0a808"/><stop offset="0.5" stop-color="#ffe040"/><stop offset="1" stop-color="#f0b010"/></linearGradient></defs>
<path d="M69 1030.6 a13.4 14 0 0 1 26.8 -0.8 v3 h-18.6 a5.6 5.6 0 0 0 10.4 1.8 h7.4 a13.4 14 0 0 1 -26 -4 z M77.4 1027.4 h10.4 a5.2 5.2 0 0 0 -10.4 0 z" fill="url(#gIE)" fill-rule="evenodd" stroke="#1470c0" stroke-width="0.5"/>
<path d="M67.6 1043.2 q-3.2 -5.6 4.2 -16.2 q8 -10.4 17.8 -13.4 q5.6 -1.4 5.6 3 q-1.2 -2.4 -5.4 -0.8 q-8.6 3.8 -15 12.2 q-6.6 9 -5 12.8 q0.8 1.8 4 0.6 q-4.2 3.4 -6.2 1.8 z" fill="url(#gIEr)" stroke="#e09808" stroke-width="0.4"/>
<defs><linearGradient id="gFo" x1="0" y1="0" x2="0" y2="1"><stop offset="0" stop-color="#fbeeb8"/><stop offset="1" stop-color="#f0d478"/></linearGradient><linearGradient id="gSt" x1="0" y1="0" x2="0" y2="1"><stop offset="0" stop-color="#b8e8fc"/><stop offset="1" stop-color="#3ca0e0"/></linearGradient></defs>
<g stroke="#d8b458" stroke-width="0.7">
<path d="M127.6 1043.4 v-24.6 q0 -1.4 1.4 -1.4 h13 q1.4 0 1.4 1.4 v24.6 z" fill="#f4dc90"/>
<path d="M136.6 1043.4 v-22.6 q0 -1.4 1.4 -1.4 h11 q1.4 0 1.4 1.4 v22.6 z" fill="#f4dc90"/>
<path d="M144.6 1043.4 v-20.6 q0 -1.4 1.4 -1.4 h11.4 q1.4 0 1.4 1.4 v20.6 z" fill="#f4dc90"/>
<path d="M127.6 1025.6 q0 -1.2 1.2 -1.2 h16 l1.6 1.6 h11.2 q1.2 0 1.2 1.2 v15.6 q0 1.2 -1.2 1.2 h-28.8 q-1.2 0 -1.2 -1.2 z" fill="url(#gFo)"/>
</g>
<rect x="130.6" y="1018" width="3.2" height="1.9" fill="#10b830"/><rect x="134" y="1018" width="6" height="1.9" fill="#fff"/><rect x="139" y="1020" width="3" height="1.9" fill="#e03020"/><rect x="142.2" y="1020" width="5.6" height="1.9" fill="#fff"/><rect x="147" y="1022.2" width="3" height="1.9" fill="#2090f0"/><rect x="150.2" y="1022.2" width="5.2" height="1.9" fill="#fff"/>
<path d="M131.2 1034 q0 -1 1 -1 h21.8 q1 0 1 1 v11.6 h-6.4 v-6.8 h-11 v6.8 h-6.4 z" fill="url(#gSt)" stroke="#2c90d4" stroke-width="0.8" opacity="0.93"/>
<path d="M132.2 1034.2 h21.6" stroke="#e8f8ff" stroke-width="1"/>
<defs><radialGradient id="gFFo" cx="0.62" cy="0.3" r="0.85"><stop offset="0" stop-color="#ffe040"/><stop offset="0.35" stop-color="#f8a020"/><stop offset="0.7" stop-color="#ee5a18"/><stop offset="1" stop-color="#d63410"/></radialGradient><radialGradient id="gFFb" cx="0.45" cy="0.3" r="0.75"><stop offset="0" stop-color="#40b0f0"/><stop offset="0.6" stop-color="#1868c8"/><stop offset="1" stop-color="#0c2c80"/></radialGradient></defs>
<circle cx="205" cy="1031.4" r="13.8" fill="url(#gFFo)"/>
<circle cx="207.4" cy="1027.8" r="8.8" fill="url(#gFFb)"/>
<path d="M192.4 1019.2 l3.8 2.6 q3.4 -1.4 6.8 0.4 q-1.4 0.6 -1.6 1.6 q1.4 0.2 2.4 1 q-1.6 0.4 -2 1.6 q-1.6 0.6 -1.6 2.2 q0.2 1.6 -1.4 2.4 q-0.6 2.4 1.6 3.4 q3 1 6.4 -0.6 q1.4 -0.2 2.2 0.4 q-2.2 3.8 -7 4.2 q-6 0 -9.4 -5 q-3 -6 -0.2 -14.2 z" fill="#f07a18"/>
<path d="M215.4 1021.6 q3.4 3.6 3.4 9.8 q0 4 -1.8 7 q0.8 -5 -0.4 -8.6 q-0.2 -5 -1.2 -8.2 z" fill="#ffe85c" opacity="0.9"/>
<defs><radialGradient id="gTB" cx="0.55" cy="0.3" r="0.8"><stop offset="0" stop-color="#58a8f0"/><stop offset="0.55" stop-color="#1c64c4"/><stop offset="1" stop-color="#0c2c78"/></radialGradient></defs>
<path d="M253.6 1034.6 q-1.4 -9.6 5.4 -15.6 q7.6 -5.6 16 -1.4 q7.6 4.6 7.6 13.6 q-0.6 9 -9.6 13.8 q-2.4 0.8 -4.6 0.2 q4.6 -2.6 5 -6.2 l-17 -5 q0.2 3.6 2 6 q-3.6 -1.6 -4.8 -5.4 z" fill="url(#gTB)"/>
<path d="M256 1024.6 l6.6 5.6 l11.4 -4 q1.6 7 -0.6 14.4 l-7.4 -2.4 l-10.4 -5.2 q-0.4 -4.6 0.4 -8.4 z" fill="#ece8e0" stroke="#b8b0a4" stroke-width="0.5"/>
<path d="M256 1024.6 l6.6 5.6 l11.4 -4 M262.6 1030.2 l3.4 8" stroke="#a8a098" stroke-width="0.7" fill="none"/>
<path d="M257.4 1026 q0.6 -5.6 5.6 -7.2 q5.4 -1 9 3.2 q-4.6 -0.6 -7.4 2 q-2.6 2.4 -4 6 l-2.4 -2 z" fill="#2a78d4"/>
<path d="M257.2 1023.6 l1.6 4.2 l1.6 -2.6 z" fill="#d8dce4"/><circle cx="262" cy="1021.8" r="0.9" fill="#f8a820"/>
<g><circle cx="329" cy="1030" r="14.299999999999999" fill="#e8e8e8"/><path d="M329.00 1023.10 L341.87 1023.10 A14.6 14.6 0 0 0 316.59 1022.31 L323.02 1033.45 A6.9 6.9 0 0 1 329.00 1023.10 Z" fill="#dd4b3e"/><path d="M341.87 1023.10 A14.6 14.6 0 0 1 328.54 1044.59 L334.98 1033.45 A6.9 6.9 0 0 0 329.00 1023.10 Z" fill="#fdd03c"/><path d="M328.54 1044.59 A14.6 14.6 0 0 1 316.59 1022.31 L323.02 1033.45 A6.9 6.9 0 0 0 334.98 1033.45 Z" fill="#1ea362"/>
<circle cx="329" cy="1030" r="6.9" fill="#f6f6f6"/><circle cx="329" cy="1030" r="5.5" fill="#4b8bf5"/></g>
<g><rect x="375.4" y="1014.4" width="31.4" height="31.4" rx="3.4" fill="#dfe4ea" stroke="#1c5ca0" stroke-width="1.6"/>
<path d="M377 1036 q6 -2 8.4 -8 q2.6 -7 9 -10 q4 -1.6 10.6 -1.4 v5 q-6.4 1 -9 5.6 q-1.6 3.4 -6 5 q-2.4 6 -6 9.6 q-4 2 -7 1 z" fill="#f88c10"/>
<path d="M377 1040 q7 -3 9.4 -9 q2.6 -6 8 -9 q5 -2.4 10.6 -2 v4 q-6 1.4 -8.4 5 q-2 3.4 -6.4 5 q-2.4 5 -5.6 8 q-4 2.6 -7.6 1 z" fill="#fcd020"/>
<path d="M386 1016 q-4 4 -4.6 10 q-0.6 5 -4 8 v-16 q0 -2 2 -2 z" fill="#4890d8"/><path d="M390 1044 q4 -4 7 -5 q5 -1.4 8 -5 v8 q0 2 -2 2 z" fill="#9aa4b0"/></g>
<g><rect x="437" y="1014" width="32.2" height="31.8" fill="#cfe8f6"/><path d="M437 1036 q14 -8 32.2 -4 v13.8 h-32.2 z" fill="#e4f2fa"/>
<path d="M447.4 1018 q0 -1.6 1.6 -1.6 h10 q1.6 0 1.6 1.6 v3 h-7.4 v4.4 h6 v4.8 h-6 v7.6 q-3.4 2 -5.8 0 z" fill="#e8861c"/><path d="M447.4 1018 q0 -1.6 1.6 -1.6 h2 v22 q-2 0.6 -3.6 -0.6 z" fill="#c0600c"/>
<text x="455.6" y="1043.4" font-size="6.6" font-weight="bold" fill="#1888d8" textLength="11.4" lengthAdjust="spacingAndGlyphs">360</text></g>
<polygon points="1420.8,1033.4 1428.2,1033.4 1424.5,1029.2" fill="#fff"/>
<rect x="1441" y="1023" width="16" height="16" rx="1.6" fill="#e4e6f4"/><text x="1442.6" y="1037.4" font-size="17" fill="#10107c" textLength="12.6" lengthAdjust="spacingAndGlyphs">ti</text><circle cx="1449.6" cy="1028.4" r="1.4" fill="#20d030"/><circle cx="1454.6" cy="1025.4" r="1.4" fill="#20d030"/>
<ellipse cx="1477.00" cy="1031.00" rx="3.2" ry="2.2" transform="rotate(0 1477.00 1031.00)" fill="#6cc820" stroke="#3c9010" stroke-width="0.4"/><ellipse cx="1475.65" cy="1034.25" rx="3.2" ry="2.2" transform="rotate(45 1475.65 1034.25)" fill="#6cc820" stroke="#3c9010" stroke-width="0.4"/><ellipse cx="1472.40" cy="1035.60" rx="3.2" ry="2.2" transform="rotate(90 1472.40 1035.60)" fill="#6cc820" stroke="#3c9010" stroke-width="0.4"/><ellipse cx="1469.15" cy="1034.25" rx="3.2" ry="2.2" transform="rotate(135 1469.15 1034.25)" fill="#6cc820" stroke="#3c9010" stroke-width="0.4"/><ellipse cx="1467.80" cy="1031.00" rx="3.2" ry="2.2" transform="rotate(180 1467.80 1031.00)" fill="#6cc820" stroke="#3c9010" stroke-width="0.4"/><ellipse cx="1469.15" cy="1027.75" rx="3.2" ry="2.2" transform="rotate(225 1469.15 1027.75)" fill="#6cc820" stroke="#3c9010" stroke-width="0.4"/><ellipse cx="1472.40" cy="1026.40" rx="3.2" ry="2.2" transform="rotate(270 1472.40 1026.40)" fill="#6cc820" stroke="#3c9010" stroke-width="0.4"/><ellipse cx="1475.65" cy="1027.75" rx="3.2" ry="2.2" transform="rotate(315 1475.65 1027.75)" fill="#6cc820" stroke="#3c9010" stroke-width="0.4"/><circle cx="1472.4" cy="1031" r="1.6" fill="#f8e020"/>
<g fill="#fff"><polygon points="1490.1,1025.6 1493.6,1023.3 1497.1,1025.6 1493.6,1027.8999999999999"/><polygon points="1497.1,1025.6 1500.6,1023.3 1504.1,1025.6 1500.6,1027.8999999999999"/><polygon points="1490.1,1030.2 1493.6,1027.9 1497.1,1030.2 1493.6,1032.5"/><polygon points="1497.1,1030.2 1500.6,1027.9 1504.1,1030.2 1500.6,1032.5"/><polygon points="1493.6,1033 1497.1,1030.8 1500.6,1033 1500.6,1034.6 1497.1,1036.8 1493.6,1034.6"/></g>
<circle cx="1500.8" cy="1034.6" r="3.8" fill="#2cb040" stroke="#fff" stroke-width="0.6"/><path d="M1498.8 1034.6 l1.4 1.6 l2.6 -3" stroke="#fff" stroke-width="1.1" fill="none"/>
<g stroke="#fff" stroke-width="1.2" fill="none"><rect x="1518" y="1025.4" width="9.6" height="7.4"/><path d="M1522.8 1032.8 v3 M1519 1036.4 h8"/><rect x="1514.4" y="1023.6" width="3" height="4.6" rx="1.4" fill="#5a5a5a"/><path d="M1515.9 1028.2 v7 q0 1.4 1.6 1.4 h1.6"/></g>
<path d="M1538 1028.6 h2.6 l4 -3.8 v13 l-4 -3.8 h-2.6 z" fill="#fff"/><path d="M1546.6 1028.8 q1.4 2.4 0 4.8 M1548.8 1027 q2.6 4.2 0 8.4 M1551 1025.2 q3.6 6 0 12" stroke="#fff" stroke-width="1" fill="none"/>
<text x="1567.6" y="1034.6" textLength="22.2" lengthAdjust="spacingAndGlyphs" font-size="11.8" fill="#fff" font-weight="normal" >ENG</text>
<text x="1622" y="1026.6" textLength="25" lengthAdjust="spacingAndGlyphs" font-size="11.8" fill="#fff" font-weight="normal" >17:01</text>
<text x="1607.4" y="1043.8" textLength="53.6" lengthAdjust="spacingAndGlyphs" font-size="11.8" fill="#fff" font-weight="normal" >29.09.2016</text>
</g>
<path d="M162 1009.2 h72.8" stroke="#646464" stroke-width="2.8" fill="none"/><path d="M162.9 1004 v5 M185.9 1004 v5 M209.8 1004 v5 M233.9 1004 v5" stroke="#646464" stroke-width="1.8" fill="none"/>
<polygon points="240.2,978.4 252,978.4 252,981.6 247.2,986.6 245.2,986.6 240.2,981.6" fill="#666"/><rect x="245.3" y="986" width="1.8" height="24" fill="#666"/>
<line x1="314.6" y1="838.4" x2="233.6" y2="972.6" stroke="#000" stroke-width="5.4" stroke-linecap="round"/>
<path fill-rule="evenodd" fill="#000" d="M128.9 994.8 a83.5 25.2 0 1 0 167 0 a83.5 25.2 0 1 0 -167 0 z M134.1 994.5 a78.3 18.7 0 1 0 156.6 0 a78.3 18.7 0 1 0 -156.6 0 z"/>
</svg></body></html>
